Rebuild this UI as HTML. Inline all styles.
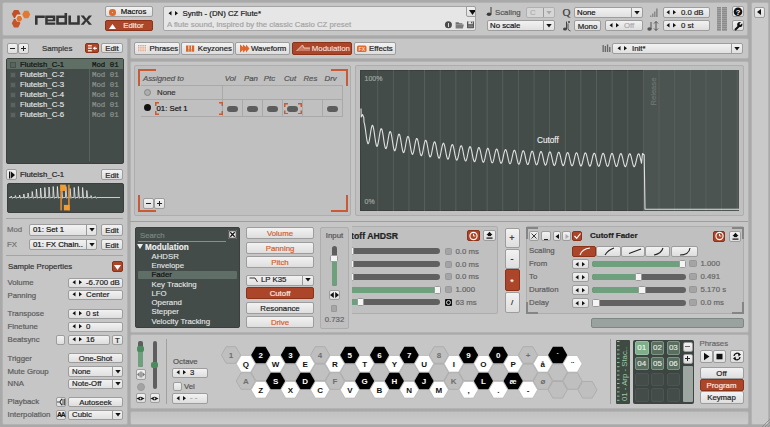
<!DOCTYPE html><html><head><meta charset="utf-8"><style>
*{margin:0;padding:0;box-sizing:border-box}
html,body{width:770px;height:427px;overflow:hidden;background:#a9a9a9;font-family:"Liberation Sans",sans-serif}
div{position:absolute}
.pn{border:1px solid #b3b3b3;border-radius:2px}
.ip{background:#c0c0c0;border:1px solid #adadad;border-radius:2px}
.dk{background:#444c49;border:1px solid #3a403e;border-radius:2px}
.t{white-space:nowrap;line-height:10px;-webkit-text-stroke:0.2px currentColor}
.b{background:linear-gradient(#f2f2f2,#dedede);border:1px solid #9d9d9d;border-radius:2px;text-align:center;white-space:nowrap;overflow:hidden;-webkit-text-stroke:0.2px currentColor}
.b.act{background:#ab462a;border-color:#8a3318}
.dd{background:linear-gradient(#f2f2f2,#e0e0e0);border:1px solid #9d9d9d;border-radius:2px}
.dd.dis{background:#d6d6d6;border-color:#b0b0b0}
.inp{background:#e6e6e6;border:1px solid #a5a5a5;border-radius:2px}
</style></head><body><div class="pn" style="left:2px;top:2px;width:746px;height:34px;background:#c6c6c6;"></div>
<div class="pn" style="left:751px;top:2px;width:17.5px;height:423px;background:#c9c9c9;"></div>
<div class="pn" style="left:2px;top:38px;width:126px;height:387px;background:#c6c6c6;"></div>
<div class="pn" style="left:130px;top:38px;width:618.5px;height:21px;background:#c6c6c6;"></div>
<div class="pn" style="left:130px;top:61px;width:618.5px;height:272px;background:#c6c6c6;"></div>
<div class="pn" style="left:130px;top:334px;width:618.5px;height:75px;background:#c6c6c6;"></div>
<div class="pn" style="left:130px;top:410.5px;width:618.5px;height:14.5px;background:linear-gradient(#c2c2c2,#cbcbcb);"></div>
<svg style="position:absolute;left:0;top:0" width="100" height="36"><polygon points="11.80,14.00 14.00,9.90 18.40,9.90 20.60,14.00 18.40,18.10 14.00,18.10" fill="#c1502a"/><polygon points="11.80,23.25 13.95,18.95 18.25,18.95 20.40,23.25 18.25,27.55 13.95,27.55" fill="#c4542b"/><polygon points="22.25,14.45 24.25,10.75 28.25,10.75 30.25,14.45 28.25,18.15 24.25,18.15" fill="#e17a31"/><polygon points="15.00,18.10 17.00,14.40 21.00,14.40 23.00,18.10 21.00,21.80 17.00,21.80" fill="#d8d6d4"/><polygon points="16.40,18.75 17.88,16.05 20.83,16.05 22.30,18.75 20.83,21.45 17.88,21.45" fill="#e0742e"/><g fill="#363636">
<path d="M35 15.5 h9.8 v2.6 h-7.2 v6.7 h-2.6z"/>
<path fill-rule="evenodd" d="M45.2 15.5 H55.3 V21.3 H47.7 V22.4 H55.3 V24.8 H45.2Z M47.7 18 H52.8 V19.6 H47.7Z"/>
<path fill-rule="evenodd" d="M56.2 15.5 H64.5 V13 H67.1 V24.8 H56.2Z M58.8 18 V22.3 H64.5 V18Z"/>
<path d="M68.4 15.5 H71 V22.3 H77.2 V15.5 H79.8 V24.8 H68.4Z"/>
<path d="M80.6 15.5 H83.8 L86.3 18.7 L88.8 15.5 H92 L88 20.15 L92 24.8 H88.8 L86.3 21.6 L83.8 24.8 H80.6 L84.6 20.15Z"/>
</g></svg>
<div class="b" style="left:105px;top:6px;width:48px;height:11px;"><div style="position:absolute;left:3px;top:2px;width:6.5px;height:6.5px;border-radius:50%;background:#de6c2e"></div><div style="position:absolute;left:6px;top:4.8px;width:1px;height:1px;background:#f6d0b8"></div><div class="t" style="left:12.5px;top:0px;width:30px;text-align:center;font-size:7.8px;line-height:10px;color:#111">Macros</div></div>
<div class="b act" style="left:105px;top:20px;width:48px;height:11px;"><svg width="7" height="5" style="position:absolute;left:3px;top:2.5px"><path d="M0 5 L3.5 0 L7 5Z" fill="#fff"/></svg><div class="t" style="left:12.5px;top:0px;width:30px;text-align:center;font-size:7.8px;line-height:10px;color:#f6e4de">Editor</div></div>
<div class="inp" style="left:163px;top:6px;width:313px;height:25px;"></div>
<svg width="11" height="5" style="position:absolute;left:168px;top:11px"><path d="M0.5 2.3 L3.5 0 L3.5 4.6Z M10 2.3 L7 0 L7 4.6Z" fill="#111"/></svg>
<div class="t" style="left:182.5px;top:8.5px;font-size:7.8px;color:#1a1a1a;font-weight:normal;text-align:left;">Synth - (DN) CZ Flute*</div>
<div class="t" style="left:167px;top:19.5px;font-size:7.8px;color:#a4a4a4;font-weight:normal;text-align:left;">A flute sound, inspired by the classic Casio CZ preset</div>
<div class="b" style="left:466px;top:6px;width:10px;height:11px;border-radius:0 2px 0 2px"><svg width="7" height="5" style="position:absolute;left:1.5px;top:3px"><path d="M0 0 L7 0 L3.5 5Z" fill="#111"/></svg></div>
<svg style="position:absolute;left:440px;top:18px" width="40" height="14">
<circle cx="8.4" cy="6.75" r="3.5" fill="#4a4a4a"/><rect x="8" y="5" width="0.9" height="4" fill="#eaeaea"/>
<path d="M15.6 4.2 h3 l0.8 1 h3 v1.2 h-6.8z" fill="#6e6e6e"/><path d="M15.6 6.4 h8.3 l-1 4 h-7.3z" fill="#7c7c7c"/>
<rect x="27" y="3.2" width="7" height="7" rx="0.6" fill="#555"/><rect x="28.3" y="3.2" width="4.4" height="3" fill="#e0e0e0"/><rect x="31" y="3.7" width="1" height="1.6" fill="#555"/><rect x="28" y="7.3" width="5" height="2" fill="#808080"/>
</svg>
<svg style="position:absolute;left:486px;top:6px" width="8" height="11"><ellipse cx="3" cy="8.2" rx="2.3" ry="1.8" fill="#3a3a3a"/><rect x="4.5" y="1" width="1" height="7" fill="#3a3a3a"/></svg>
<div class="t" style="left:495px;top:7.5px;font-size:7.8px;color:#555;font-weight:normal;text-align:left;">Scaling</div>
<div class="dd dis" style="left:526px;top:7px;width:29px;height:11px;"><div class="t" style="left:3px;top:-0.5px;font-size:7.8px;color:#b0b0b0">C</div><div style="position:absolute;right:0;top:0;width:11px;height:9px;border-left:1px solid #9a9a9a"></div><svg width="6" height="4" style="position:absolute;right:2.0px;top:2.75px"><path d="M0.3 0 L5.7 0 L3 3.5Z" fill="#aaa"/></svg></div>
<div class="dd" style="left:487px;top:20px;width:68px;height:11px;"><div class="t" style="left:2px;top:-0.5px;font-size:7.8px;color:#111">No scale</div><div style="position:absolute;right:0;top:0;width:11px;height:9px;border-left:1px solid #9a9a9a"></div><svg width="6" height="4" style="position:absolute;right:2.0px;top:2.75px"><path d="M0.3 0 L5.7 0 L3 3.5Z" fill="#111"/></svg></div>
<div class="t" style="left:562.5px;top:6px;font-family:'Liberation Serif',serif;font-size:11px;line-height:12px;color:#3c3c3c;-webkit-text-stroke:0.2px #3c3c3c">Q</div>
<div class="dd" style="left:574px;top:7px;width:69px;height:11px;"><div class="t" style="left:2px;top:-0.5px;font-size:7.8px;color:#111">None</div><div style="position:absolute;right:0;top:0;width:11px;height:9px;border-left:1px solid #9a9a9a"></div><svg width="6" height="4" style="position:absolute;right:2.0px;top:2.75px"><path d="M0.3 0 L5.7 0 L3 3.5Z" fill="#111"/></svg></div>
<svg style="position:absolute;left:561px;top:20px" width="12" height="12"><path d="M5.5 1.5 v7.5" stroke="#444" stroke-width="1"/><ellipse cx="4" cy="9" rx="2" ry="1.6" fill="#444"/><path d="M7 3.5 v5 q0 2 2.5 2.5" stroke="#444" stroke-width="0.9" fill="none"/><circle cx="8" cy="2" r="1" fill="#444"/></svg>
<div class="b" style="left:574px;top:20px;width:27px;height:11px;line-height:11px;font-size:7.8px;color:#222;font-weight:normal;">Mono</div>
<div class="b" style="left:605px;top:20px;width:38px;height:11px;"><svg width="11" height="5" style="position:absolute;left:2.5px;top:1.9000000000000001px"><path d="M0.5 2.3 L3.5 0 L3.5 4.6Z M10 2.3 L7 0 L7 4.6Z" fill="#111"/></svg><div class="t" style="left:18px;top:-0.5px;font-size:7.8px;color:#aaa">Off</div></div>
<svg style="position:absolute;left:648px;top:6px" width="12" height="12"><path d="M2 11 h1.5 v-1.5 h-1.5z M4 11 h1.5 v-3.5 h-1.5z M6 11 h1.5 v-5.5 h-1.5z M8 11 h1.7 v-8.5 h-1.7z" fill="#8c8c8c"/></svg>
<div class="b" style="left:662.5px;top:7px;width:47.5px;height:11px;"><svg width="11" height="5" style="position:absolute;left:2.5px;top:1.9000000000000001px"><path d="M0.5 2.3 L3.5 0 L3.5 4.6Z M10 2.3 L7 0 L7 4.6Z" fill="#111"/></svg><div class="t" style="left:17.5px;top:-0.5px;font-size:7.8px;color:#222">0.0 dB</div></div>
<svg style="position:absolute;left:646px;top:20px" width="14" height="12"><path d="M5 2 v7" stroke="#555" stroke-width="1"/><ellipse cx="3.5" cy="9" rx="2.2" ry="1.7" fill="#555"/><path d="M10 1.5 v9 M8 3.5 l2-2 l2 2 M8 8.5 l2 2 l2-2" stroke="#555" stroke-width="1" fill="none"/></svg>
<div class="b" style="left:662.5px;top:20px;width:47.5px;height:11px;"><svg width="11" height="5" style="position:absolute;left:2.5px;top:1.9000000000000001px"><path d="M0.5 2.3 L3.5 0 L3.5 4.6Z M10 2.3 L7 0 L7 4.6Z" fill="#111"/></svg><div class="t" style="left:17.5px;top:-0.5px;font-size:7.8px;color:#222">0 st</div></div>
<div style="position:absolute;left:716.5px;top:7px;width:4.5px;height:23.5px;background:repeating-linear-gradient(#8c8c8c 0 1px,#9e9e9e 1px 2px)"></div>
<div style="position:absolute;left:722px;top:7px;width:4.5px;height:23.5px;background:repeating-linear-gradient(#8c8c8c 0 1px,#9e9e9e 1px 2px)"></div>
<div class="b" style="left:732px;top:6px;width:12px;height:11px;line-height:11px;font-size:7.8px;color:#222;font-weight:normal;"></div>
<svg style="position:absolute;left:733px;top:7px" width="10" height="10"><circle cx="5" cy="4.8" r="4.3" fill="#111"/><text x="5" y="7.6" text-anchor="middle" font-family="Liberation Sans" font-weight="bold" font-size="7.5" fill="#fff">?</text></svg>
<div class="b" style="left:732px;top:20px;width:12px;height:11px;line-height:11px;font-size:7.8px;color:#222;font-weight:normal;"></div>
<svg style="position:absolute;left:733px;top:21px" width="10" height="10"><path d="M2 9 L5.8 5.2" stroke="#111" stroke-width="2"/><circle cx="6.8" cy="3.5" r="2.6" fill="#111"/><path d="M6.8 3.5 L9.5 0.8" stroke="#e6e6e6" stroke-width="1.6"/></svg>
<div class="b" style="left:753.7px;top:6.5px;width:11px;height:11px;line-height:11px;font-size:7.8px;color:#222;font-weight:normal;"></div>
<svg style="position:absolute;left:757px;top:9px" width="5" height="6"><path d="M0 3 L4 0 L4 6Z" fill="#111"/></svg>
<div class="b" style="left:6.5px;top:42.5px;width:11.5px;height:11px;line-height:11px;font-size:7.8px;color:#222;font-weight:normal;"></div>
<div class="b" style="left:17.5px;top:42.5px;width:11.5px;height:11px;line-height:11px;font-size:7.8px;color:#222;font-weight:normal;"></div>
<div style="left:10px;top:48px;width:5px;height:1px;background:#222"></div><div style="left:21px;top:48px;width:5px;height:1px;background:#222"></div><div style="left:23px;top:46px;width:1px;height:5px;background:#222"></div>
<div class="t" style="left:42px;top:43.8px;font-size:7.8px;color:#333;font-weight:normal;text-align:left;">Samples</div>
<div class="b act" style="left:85px;top:43px;width:14px;height:10px;line-height:10px;font-size:7.8px;color:#222;font-weight:normal;"></div>
<svg style="position:absolute;left:86px;top:44px" width="12" height="9"><path d="M2 1.8 h3.8 M2 4.3 h3.8 M2 6.8 h3.8" stroke="#f4d8cc" stroke-width="1.4"/><path d="M7.5 4.3 h3.5" stroke="#fff" stroke-width="1"/><path d="M7 4.3 L9.3 2.3 V6.3Z" fill="#fff"/></svg>
<div class="b" style="left:101px;top:43px;width:22px;height:10px;line-height:10px;font-size:7.8px;color:#222;font-weight:normal;">Edit</div>
<div class="dk" style="left:6px;top:58px;width:118px;height:106px;"></div>
<div style="position:absolute;left:7px;top:59px;width:116px;height:10px;background:#5f6f66"></div>
<div style="position:absolute;left:89px;top:69px;width:1px;height:92px;background:#5a625e"></div>
<div style="position:absolute;left:10px;top:61.5px;width:6px;height:6px;background:#5c625f;border:1px solid #4a504d"></div>
<div class="t" style="left:20px;top:59.5px;font-size:7.8px;color:#111;font-weight:normal;text-align:left;">Fluteish_C-1</div>
<div class="t" style="left:92px;top:59.5px;font-family:'Liberation Mono',monospace;font-size:7.4px;color:#111">Mod 01</div>
<div style="position:absolute;left:10px;top:71.5px;width:6px;height:6px;background:#5c625f;border:1px solid #4a504d"></div>
<div class="t" style="left:20px;top:69.5px;font-size:7.8px;color:#eef0ef;font-weight:normal;text-align:left;-webkit-text-stroke-width:0.1px;">Fluteish_C-2</div>
<div class="t" style="left:92px;top:69.5px;font-family:'Liberation Mono',monospace;font-size:7.4px;color:#8c938f">Mod 01</div>
<div style="position:absolute;left:10px;top:81.5px;width:6px;height:6px;background:#5c625f;border:1px solid #4a504d"></div>
<div class="t" style="left:20px;top:79.5px;font-size:7.8px;color:#eef0ef;font-weight:normal;text-align:left;-webkit-text-stroke-width:0.1px;">Fluteish_C-3</div>
<div class="t" style="left:92px;top:79.5px;font-family:'Liberation Mono',monospace;font-size:7.4px;color:#8c938f">Mod 01</div>
<div style="position:absolute;left:10px;top:91.5px;width:6px;height:6px;background:#5c625f;border:1px solid #4a504d"></div>
<div class="t" style="left:20px;top:89.5px;font-size:7.8px;color:#eef0ef;font-weight:normal;text-align:left;-webkit-text-stroke-width:0.1px;">Fluteish_C-4</div>
<div class="t" style="left:92px;top:89.5px;font-family:'Liberation Mono',monospace;font-size:7.4px;color:#8c938f">Mod 01</div>
<div style="position:absolute;left:10px;top:101.5px;width:6px;height:6px;background:#5c625f;border:1px solid #4a504d"></div>
<div class="t" style="left:20px;top:99.5px;font-size:7.8px;color:#eef0ef;font-weight:normal;text-align:left;-webkit-text-stroke-width:0.1px;">Fluteish_C-5</div>
<div class="t" style="left:92px;top:99.5px;font-family:'Liberation Mono',monospace;font-size:7.4px;color:#8c938f">Mod 01</div>
<div style="position:absolute;left:10px;top:111.5px;width:6px;height:6px;background:#5c625f;border:1px solid #4a504d"></div>
<div class="t" style="left:20px;top:109.5px;font-size:7.8px;color:#eef0ef;font-weight:normal;text-align:left;-webkit-text-stroke-width:0.1px;">Fluteish_C-6</div>
<div class="t" style="left:92px;top:109.5px;font-family:'Liberation Mono',monospace;font-size:7.4px;color:#8c938f">Mod 01</div>
<div class="b" style="left:6px;top:169px;width:11px;height:11px;line-height:11px;font-size:7.8px;color:#222;font-weight:normal;"></div>
<svg style="position:absolute;left:8px;top:171px" width="8" height="8"><rect x="1" y="0.5" width="1.3" height="7" fill="#111"/><path d="M3 0.5 L7 4 L3 7.5Z" fill="#111"/></svg>
<div class="t" style="left:20px;top:169.5px;font-size:7.8px;color:#222;font-weight:normal;text-align:left;">Fluteish_C-1</div>
<div class="b" style="left:101px;top:169px;width:22px;height:11px;line-height:11px;font-size:7.8px;color:#222;font-weight:normal;">Edit</div>
<div class="dk" style="left:6.5px;top:183px;width:117px;height:30px;"></div>
<svg style="position:absolute;left:0;top:0" width="130" height="220"><path d="M9 197.5 L10.9 197.5 L11.2 196.0 L12.2 198.3 L13.0 197.5 L15.1 197.5 L15.4 195.5 L16.4 198.3 L17.2 197.5 L19.3 197.5 L19.6 195.0 L20.6 198.3 L21.4 197.5 L23.5 197.5 L23.8 194.0 L24.8 198.3 L25.6 197.5 L27.7 197.5 L28.0 193.0 L29.0 198.3 L29.8 197.5 L31.9 197.5 L32.2 191.5 L33.2 198.3 L34.0 197.5 L36.1 197.5 L36.4 189.0 L37.4 198.3 L38.2 197.5 L40.3 197.5 L40.6 188.0 L41.6 198.3 L42.4 197.5 L44.5 197.5 L44.8 187.5 L45.8 198.3 L46.6 197.5 L48.7 197.5 L49.0 187.0 L50.0 198.3 L50.8 197.5 L52.9 197.5 L53.2 186.5 L54.2 198.3 L55.0 197.5 L57.1 197.5 L57.4 186.5 L58.4 198.3 L59.2 197.5 L61.3 197.5 L61.6 186.5 L62.6 198.3 L63.4 197.5 L65.5 197.5 L65.8 186.5 L66.8 198.3 L67.6 197.5 L69.7 197.5 L70.0 188.5 L71.0 198.3 L71.8 197.5 L73.9 197.5 L74.2 187.5 L75.2 198.3 L76.0 197.5 L78.1 197.5 L78.4 186.5 L79.4 198.3 L80.2 197.5 L82.3 197.5 L82.6 187.5 L83.6 198.3 L84.4 197.5 L86.5 197.5 L86.8 190.5 L87.8 198.3 L88.6 197.5 L90.7 197.5 L91.0 195.5 L92.0 198.3 L92.8 197.5 L94.9 197.5 L95.2 196.5 L96.2 198.3 L97.0 197.5 L120 197.5" fill="none" stroke="#eeeeee" stroke-width="0.8"/><rect x="60.3" y="184.7" width="1.6" height="25.7" fill="#e08a30"/><rect x="68.1" y="184.7" width="1.6" height="25.7" fill="#e08a30"/><rect x="60.3" y="184.7" width="5.5" height="6.2" fill="#f49c30"/><rect x="63.9" y="204.9" width="5.8" height="5.5" fill="#f49c30"/></svg>
<div style="position:absolute;left:6px;top:218px;width:117px;height:1px;background:#a4a4a4"></div>
<div class="t" style="left:7px;top:225px;font-size:7.8px;color:#707070;font-weight:normal;text-align:left;">Mod</div>
<div class="dd" style="left:29px;top:224px;width:68px;height:12px;"><div class="t" style="left:3px;top:0.0px;font-size:7.8px;color:#111">01: Set 1</div><div style="position:absolute;right:0;top:0;width:10px;height:10px;border-left:1px solid #9a9a9a"></div><svg width="6" height="4" style="position:absolute;right:1.5px;top:3.25px"><path d="M0.3 0 L5.7 0 L3 3.5Z" fill="#111"/></svg></div>
<div class="b" style="left:101px;top:224px;width:22px;height:12px;line-height:12px;font-size:7.8px;color:#222;font-weight:normal;">Edit</div>
<div class="t" style="left:7px;top:239.5px;font-size:7.8px;color:#707070;font-weight:normal;text-align:left;">FX</div>
<div class="dd" style="left:29px;top:239px;width:68px;height:11px;"><div class="t" style="left:3px;top:-0.5px;font-size:7.8px;color:#111">01: FX Chain..</div><div style="position:absolute;right:0;top:0;width:10px;height:9px;border-left:1px solid #9a9a9a"></div><svg width="6" height="4" style="position:absolute;right:1.5px;top:2.75px"><path d="M0.3 0 L5.7 0 L3 3.5Z" fill="#111"/></svg></div>
<div class="b" style="left:101px;top:239px;width:22px;height:11px;line-height:11px;font-size:7.8px;color:#222;font-weight:normal;">Edit</div>
<div style="position:absolute;left:6px;top:255px;width:117px;height:1px;background:#a4a4a4"></div>
<div class="t" style="left:8px;top:262px;font-size:7.8px;color:#333;font-weight:normal;text-align:left;">Sample Properties</div>
<div class="b act" style="left:112px;top:261px;width:11px;height:11px;line-height:11px;font-size:7.8px;color:#222;font-weight:normal;"></div>
<svg style="position:absolute;left:114px;top:264.5px" width="7" height="5"><path d="M0 0 L7 0 L3.5 5Z" fill="#fff"/></svg>
<div class="t" style="left:7.5px;top:277.5px;font-size:7.8px;color:#5c5c5c;font-weight:normal;text-align:left;">Volume</div>
<div class="b" style="left:68px;top:278px;width:55px;height:10px;"><svg width="11" height="5" style="position:absolute;left:2.5px;top:1.4000000000000001px"><path d="M0.5 2.3 L3.5 0 L3.5 4.6Z M10 2.3 L7 0 L7 4.6Z" fill="#111"/></svg><div class="t" style="left:17px;top:-1.0px;font-size:7.8px;color:#222">-6.700 dB</div></div>
<div class="t" style="left:7.5px;top:290.5px;font-size:7.8px;color:#5c5c5c;font-weight:normal;text-align:left;">Panning</div>
<div class="b" style="left:68px;top:290px;width:55px;height:10px;"><svg width="11" height="5" style="position:absolute;left:2.5px;top:1.4000000000000001px"><path d="M0.5 2.3 L3.5 0 L3.5 4.6Z M10 2.3 L7 0 L7 4.6Z" fill="#111"/></svg><div class="t" style="left:17px;top:-1.0px;font-size:7.8px;color:#222">Center</div></div>
<div class="t" style="left:7.5px;top:309px;font-size:7.8px;color:#5c5c5c;font-weight:normal;text-align:left;">Transpose</div>
<div class="b" style="left:68px;top:309px;width:55px;height:10px;"><svg width="11" height="5" style="position:absolute;left:2.5px;top:1.4000000000000001px"><path d="M0.5 2.3 L3.5 0 L3.5 4.6Z M10 2.3 L7 0 L7 4.6Z" fill="#111"/></svg><div class="t" style="left:17px;top:-1.0px;font-size:7.8px;color:#222">0 st</div></div>
<div class="t" style="left:7.5px;top:322px;font-size:7.8px;color:#5c5c5c;font-weight:normal;text-align:left;">Finetune</div>
<div class="b" style="left:68px;top:322px;width:55px;height:10px;"><svg width="11" height="5" style="position:absolute;left:2.5px;top:1.4000000000000001px"><path d="M0.5 2.3 L3.5 0 L3.5 4.6Z M10 2.3 L7 0 L7 4.6Z" fill="#111"/></svg><div class="t" style="left:17px;top:-1.0px;font-size:7.8px;color:#222">0</div></div>
<div class="t" style="left:7.5px;top:335px;font-size:7.8px;color:#5c5c5c;font-weight:normal;text-align:left;">Beatsync</div>
<div class="b" style="left:56px;top:335px;width:9px;height:10px;line-height:10px;font-size:7.8px;color:#222;font-weight:normal;"></div>
<div class="b" style="left:68px;top:335px;width:42px;height:10px;"><svg width="11" height="5" style="position:absolute;left:2.5px;top:1.4000000000000001px"><path d="M0.5 2.3 L3.5 0 L3.5 4.6Z M10 2.3 L7 0 L7 4.6Z" fill="#111"/></svg><div class="t" style="left:17px;top:-1.0px;font-size:7.8px;color:#222">16</div></div>
<div class="b" style="left:112px;top:335px;width:11px;height:10px;line-height:10px;font-size:7.8px;color:#222;font-weight:normal;">T</div>
<div class="t" style="left:7.5px;top:353.5px;font-size:7.8px;color:#5c5c5c;font-weight:normal;text-align:left;">Trigger</div>
<div class="b" style="left:68px;top:353px;width:55px;height:10px;line-height:10px;font-size:7.8px;color:#222;font-weight:normal;">One-Shot</div>
<div class="t" style="left:7.5px;top:366.5px;font-size:7.8px;color:#5c5c5c;font-weight:normal;text-align:left;">Mute Group</div>
<div class="dd" style="left:68px;top:366px;width:55px;height:11px;"><div class="t" style="left:3px;top:-0.5px;font-size:7.8px;color:#222">None</div><div style="position:absolute;right:0;top:0;width:10px;height:9px;border-left:1px solid #9a9a9a"></div><svg width="6" height="4" style="position:absolute;right:1.5px;top:2.75px"><path d="M0.3 0 L5.7 0 L3 3.5Z" fill="#111"/></svg></div>
<div class="t" style="left:7.5px;top:379px;font-size:7.8px;color:#5c5c5c;font-weight:normal;text-align:left;">NNA</div>
<div class="dd" style="left:68px;top:379px;width:55px;height:10px;"><div class="t" style="left:3px;top:-1.0px;font-size:7.8px;color:#222">Note-Off</div><div style="position:absolute;right:0;top:0;width:10px;height:8px;border-left:1px solid #9a9a9a"></div><svg width="6" height="4" style="position:absolute;right:1.5px;top:2.25px"><path d="M0.3 0 L5.7 0 L3 3.5Z" fill="#111"/></svg></div>
<div class="t" style="left:7.5px;top:397px;font-size:7.8px;color:#5c5c5c;font-weight:normal;text-align:left;">Playback</div>
<div class="b" style="left:55.5px;top:396.5px;width:10.5px;height:10.5px;line-height:10.5px;font-size:7.8px;color:#222;font-weight:normal;"></div>
<div class="b" style="left:68px;top:397px;width:55px;height:10px;line-height:10px;font-size:7.8px;color:#222;font-weight:normal;">Autoseek</div>
<svg style="position:absolute;left:55.5px;top:396.5px" width="11" height="10"><path d="M1.2 5 h1.6" stroke="#222" stroke-width="1.1"/><path d="M6 1.8 L3.8 5 L6 8.2" stroke="#222" stroke-width="1.1" fill="none"/><path d="M7 1.8 v6.4 M8.6 1.8 v6.4" stroke="#222" stroke-width="0.8"/></svg>
<div class="t" style="left:7.5px;top:410px;font-size:7.8px;color:#5c5c5c;font-weight:normal;text-align:left;">Interpolation</div>
<div class="b" style="left:55.5px;top:409.5px;width:10.5px;height:10.5px;line-height:10.5px;font-size:7.8px;color:#222;font-weight:normal;"></div>
<div class="dd" style="left:68px;top:410px;width:55px;height:10px;"><div class="t" style="left:3px;top:-1.0px;font-size:7.8px;color:#222">Cubic</div><div style="position:absolute;right:0;top:0;width:10px;height:8px;border-left:1px solid #9a9a9a"></div><svg width="6" height="4" style="position:absolute;right:1.5px;top:2.25px"><path d="M0.3 0 L5.7 0 L3 3.5Z" fill="#111"/></svg></div>
<div class="t" style="left:55.5px;top:409.5px;width:10.5px;text-align:center;font-size:6.8px;font-weight:bold;line-height:10.5px;color:#1a1a1a;letter-spacing:-1.2px">AA</div>
<div class="b" style="left:134px;top:42px;width:46px;height:13px;line-height:13px;font-size:7.8px;color:#222;font-weight:normal;"></div>
<div class="b" style="left:181px;top:42px;width:53px;height:13px;line-height:13px;font-size:7.8px;color:#222;font-weight:normal;"></div>
<div class="b" style="left:235px;top:42px;width:55px;height:13px;line-height:13px;font-size:7.8px;color:#222;font-weight:normal;"></div>
<div class="b act" style="left:292px;top:42px;width:60px;height:13px;line-height:13px;font-size:7.8px;color:#222;font-weight:normal;"></div>
<div class="b" style="left:354px;top:42px;width:42px;height:13px;line-height:13px;font-size:7.8px;color:#222;font-weight:normal;"></div>
<svg style="position:absolute;left:0;top:38px" width="400" height="20">
<g fill="#e49a78">
<rect x="138" y="7" width="1.4" height="7"/><rect x="140.2" y="7" width="1.4" height="7"/><rect x="142.4" y="7" width="1.4" height="7"/><rect x="144.6" y="7" width="1.4" height="7"/>
</g>
<g fill="#f2f2f2"><rect x="137" y="8" width="10" height="0.6"/><rect x="137" y="9.8" width="10" height="0.6"/><rect x="137" y="11.6" width="10" height="0.6"/><rect x="137" y="13.2" width="10" height="0.6"/></g>
<path d="M186 7.5 h8.2 v6.2 h-8.2z" fill="#d9652a"/><path d="M188.4 7.5 h0.9 v3.5 h-0.9z M191 7.5 h0.9 v3.5 h-0.9z" fill="#f2f2f2"/><path d="M188.8 11 v2.7 M191.4 11 v2.7" stroke="#f2f2f2" stroke-width="0.5"/>
<path d="M240 6.5 v8 l3-2.5 v2.5 l3-2.5 v2.5 l3.5-4 l-3.5-4 v2.5 l-3-2.5 v2.5 l-3-2.5z" fill="#e0662c"/>
<path d="M296.5 13 L302.5 7 L304 10 H310 V13Z" fill="#c97a62"/><path d="M296.5 13 L302.5 7 L304 10 H310" stroke="#f4d6cb" stroke-width="0.9" fill="none"/>
<rect x="357" y="7.5" width="9.5" height="6.5" rx="1.5" fill="#e06a30"/><text x="361.8" y="12.8" text-anchor="middle" font-family="Liberation Sans" font-weight="bold" font-size="5" fill="#f9d9c9">FX</text>
</svg>
<div class="t" style="left:149.6px;top:43.5px;font-size:7.8px;color:#222;font-weight:normal;text-align:left;">Phrases</div>
<div class="t" style="left:197.7px;top:43.5px;font-size:7.8px;color:#222;font-weight:normal;text-align:left;">Keyzones</div>
<div class="t" style="left:251px;top:43.5px;font-size:7.8px;color:#222;font-weight:normal;text-align:left;">Waveform</div>
<div class="t" style="left:311.8px;top:43.5px;font-size:7.8px;color:#f7e6e0;font-weight:normal;text-align:left;-webkit-text-stroke-width:0.1px;">Modulation</div>
<div class="t" style="left:369px;top:43.5px;font-size:7.8px;color:#222;font-weight:normal;text-align:left;">Effects</div>
<svg style="position:absolute;left:602px;top:44px" width="9" height="9"><rect x="0.5" y="1" width="1.3" height="7" fill="#666"/><rect x="2.7" y="2" width="1.3" height="6" fill="#666"/><rect x="4.9" y="0.5" width="1.3" height="7.5" fill="#666"/><rect x="7.1" y="3" width="1.3" height="5" fill="#666"/></svg>
<div class="dd" style="left:612px;top:43px;width:131px;height:11px;"><div class="t" style="left:3px;top:-0.5px;font-size:7.8px;color:#222"></div><div style="position:absolute;right:0;top:0;width:11px;height:9px;border-left:1px solid #9a9a9a"></div><svg width="6" height="4" style="position:absolute;right:2.0px;top:2.75px"><path d="M0.3 0 L5.7 0 L3 3.5Z" fill="#111"/></svg></div>
<svg width="11" height="5" style="position:absolute;left:617px;top:46px"><path d="M0.5 2.3 L3.5 0 L3.5 4.6Z M10 2.3 L7 0 L7 4.6Z" fill="#111"/></svg>
<div class="t" style="left:632px;top:43.5px;font-size:7.8px;color:#222;font-weight:normal;text-align:left;">Init*</div>
<div class="ip" style="left:134.2px;top:65.4px;width:217.3px;height:150.4px;"></div>
<div style="position:absolute;left:137.5px;top:69px;width:18px;height:16.5px;border:0 solid #c95a36;border-top-width:2px;border-left-width:2px;box-sizing:border-box"></div>
<div style="position:absolute;left:330.8px;top:69px;width:17.2px;height:16.5px;border:0 solid #c95a36;border-top-width:2px;border-right-width:2px;box-sizing:border-box"></div>
<div style="position:absolute;left:137.5px;top:195px;width:18px;height:17px;border:0 solid #c95a36;border-bottom-width:2px;border-left-width:2px;box-sizing:border-box"></div>
<div style="position:absolute;left:330.8px;top:195px;width:17.2px;height:17px;border:0 solid #c95a36;border-bottom-width:2px;border-right-width:2px;box-sizing:border-box"></div>
<div class="t" style="left:143px;top:73.5px;font-size:7.8px;color:#555;font-weight:normal;text-align:left;font-style:italic">Assigned to</div>
<div class="t" style="left:218.3px;top:73.5px;font-size:7.8px;color:#555;font-weight:normal;text-align:center;width:24px;font-style:italic">Vol</div>
<div class="t" style="left:239px;top:73.5px;font-size:7.8px;color:#555;font-weight:normal;text-align:center;width:24px;font-style:italic">Pan</div>
<div class="t" style="left:257.5px;top:73.5px;font-size:7.8px;color:#555;font-weight:normal;text-align:center;width:24px;font-style:italic">Ptc</div>
<div class="t" style="left:278px;top:73.5px;font-size:7.8px;color:#555;font-weight:normal;text-align:center;width:24px;font-style:italic">Cut</div>
<div class="t" style="left:298.4px;top:73.5px;font-size:7.8px;color:#555;font-weight:normal;text-align:center;width:24px;font-style:italic">Res</div>
<div class="t" style="left:318.6px;top:73.5px;font-size:7.8px;color:#555;font-weight:normal;text-align:center;width:24px;font-style:italic">Drv</div>
<div style="position:absolute;left:141px;top:85px;width:201px;height:1px;background:#a9a9a9"></div>
<div style="position:absolute;left:141px;top:99px;width:201px;height:1px;background:#a9a9a9"></div>
<div style="position:absolute;left:141px;top:116px;width:201px;height:1px;background:#a9a9a9"></div>
<div style="position:absolute;left:342px;top:85px;width:1px;height:32px;background:#a9a9a9"></div>
<div style="position:absolute;left:222px;top:85px;width:1px;height:32px;background:#a9a9a9"></div>
<div style="position:absolute;left:242px;top:100px;width:1px;height:16px;background:#a9a9a9"></div>
<div style="position:absolute;left:262px;top:100px;width:1px;height:16px;background:#a9a9a9"></div>
<div style="position:absolute;left:282px;top:100px;width:1px;height:16px;background:#a9a9a9"></div>
<div style="position:absolute;left:302px;top:100px;width:1px;height:16px;background:#a9a9a9"></div>
<div style="position:absolute;left:322px;top:100px;width:1px;height:16px;background:#a9a9a9"></div>
<div style="position:absolute;left:143.5px;top:89px;width:7px;height:7px;border-radius:50%;background:#aeaeae;border:1.2px solid #858585"></div>
<div class="t" style="left:157px;top:87.5px;font-size:7.8px;color:#333;font-weight:normal;text-align:left;">None</div>
<div style="position:absolute;left:143.5px;top:104px;width:7px;height:7px;border-radius:50%;background:#111"></div>
<div class="t" style="left:156.5px;top:103.8px;font-size:7.8px;color:#111;font-weight:normal;text-align:left;">01: Set 1</div>
<svg style="position:absolute;left:155px;top:102px" width="68" height="13"><path d="M4 0.75 H0.75 V4 M0.75 9 V12.25 H4 M64 0.75 H67.25 V4 M67.25 9 V12.25 H64" fill="none" stroke="#c95a36" stroke-width="1.5"/></svg>
<div style="position:absolute;left:226.5px;top:105.5px;width:11px;height:6px;border-radius:3px;background:#5c5c5c"></div>
<div style="position:absolute;left:246.5px;top:105.5px;width:11px;height:6px;border-radius:3px;background:#5c5c5c"></div>
<div style="position:absolute;left:266.5px;top:105.5px;width:11px;height:6px;border-radius:3px;background:#5c5c5c"></div>
<div style="position:absolute;left:286.5px;top:105.5px;width:11px;height:6px;border-radius:3px;background:#5c5c5c"></div>
<div style="position:absolute;left:326.5px;top:105.5px;width:11px;height:6px;border-radius:3px;background:#5c5c5c"></div>
<svg style="position:absolute;left:283.5px;top:102.5px" width="18" height="11.5"><path d="M4 0.75 H0.75 V4 M0.75 7.5 V10.75 H4 M14 0.75 H17.25 V4 M17.25 7.5 V10.75 H14" fill="none" stroke="#c95a36" stroke-width="1.5"/></svg>
<div class="b" style="left:142.5px;top:197.5px;width:11px;height:11px;line-height:11px;font-size:7.8px;color:#222;font-weight:normal;"></div>
<div class="b" style="left:153.5px;top:197.5px;width:11px;height:11px;line-height:11px;font-size:7.8px;color:#222;font-weight:normal;"></div>
<div style="left:146px;top:203px;width:5px;height:1px;background:#222"></div><div style="left:157px;top:203px;width:5px;height:1px;background:#222"></div><div style="left:159px;top:201px;width:1px;height:5px;background:#222"></div>
<div class="ip" style="left:355.3px;top:65.4px;width:389px;height:150.4px;"></div>
<div class="dk" style="left:360px;top:70px;width:379px;height:141px;border-radius:0"></div>
<div style="position:absolute;left:644px;top:70px;width:95px;height:141px;background:#4c5451"></div>
<svg style="position:absolute;left:0;top:0" width="770" height="427"><rect x="377.30" y="70" width="0.8" height="141" fill="#5b6360"/><rect x="392.93" y="70" width="0.8" height="141" fill="#5b6360"/><rect x="408.56" y="70" width="0.8" height="141" fill="#5b6360"/><rect x="424.19" y="70" width="0.8" height="141" fill="#5b6360"/><rect x="439.82" y="70" width="0.8" height="141" fill="#5b6360"/><rect x="455.45" y="70" width="0.8" height="141" fill="#5b6360"/><rect x="471.08" y="70" width="0.8" height="141" fill="#5b6360"/><rect x="486.71" y="70" width="0.8" height="141" fill="#5b6360"/><rect x="502.34" y="70" width="0.8" height="141" fill="#5b6360"/><rect x="517.97" y="70" width="0.8" height="141" fill="#5b6360"/><rect x="533.60" y="70" width="0.8" height="141" fill="#5b6360"/><rect x="549.23" y="70" width="0.8" height="141" fill="#5b6360"/><rect x="564.86" y="70" width="0.8" height="141" fill="#5b6360"/><rect x="580.49" y="70" width="0.8" height="141" fill="#5b6360"/><rect x="596.12" y="70" width="0.8" height="141" fill="#5b6360"/><rect x="611.75" y="70" width="0.8" height="141" fill="#5b6360"/><rect x="627.38" y="70" width="0.8" height="141" fill="#5b6360"/><rect x="643.01" y="70" width="0.8" height="141" fill="#5b6360"/><rect x="658.64" y="70" width="0.8" height="141" fill="#5b6360"/><rect x="674.27" y="70" width="0.8" height="141" fill="#5b6360"/><rect x="689.90" y="70" width="0.8" height="141" fill="#5b6360"/><rect x="705.53" y="70" width="0.8" height="141" fill="#5b6360"/><rect x="721.16" y="70" width="0.8" height="141" fill="#5b6360"/><rect x="736.79" y="70" width="0.8" height="141" fill="#5b6360"/><path d="M361.0 108.5 L361.2 117.0 L362.6 114.6 L363.8 117.5 L364.0 122.1 L364.5 123.9 L365.0 126.7 L365.5 130.2 L366.0 133.9 L366.5 137.6 L367.0 140.6 L367.5 142.7 L368.0 143.7 L368.5 143.4 L369.0 141.9 L369.5 139.4 L370.0 136.3 L370.5 133.0 L371.0 129.8 L371.5 127.3 L372.0 125.7 L372.5 125.3 L373.0 126.1 L373.5 128.1 L374.0 130.9 L374.5 134.4 L375.0 138.0 L375.5 141.3 L376.0 144.0 L376.5 145.8 L377.0 146.3 L377.5 145.7 L378.0 144.0 L378.5 141.4 L379.0 138.4 L379.5 135.1 L380.0 132.2 L380.5 130.0 L381.0 128.8 L381.5 128.7 L382.0 129.7 L382.5 131.8 L383.0 134.7 L383.5 138.1 L384.0 141.6 L384.5 144.6 L385.0 147.0 L385.5 148.4 L386.0 148.6 L386.5 147.8 L387.0 145.9 L387.5 143.2 L388.0 140.1 L388.5 137.1 L389.0 134.4 L389.5 132.5 L390.0 131.5 L390.5 131.7 L391.0 133.0 L391.5 135.2 L392.0 138.2 L392.5 141.5 L393.0 144.7 L393.5 147.6 L394.0 149.6 L394.5 150.7 L395.0 150.6 L395.5 149.5 L396.0 147.4 L396.5 144.7 L397.0 141.7 L397.5 138.8 L398.0 136.4 L398.5 134.7 L399.0 134.1 L399.5 134.5 L400.0 136.0 L400.5 138.4 L401.0 141.3 L401.5 144.5 L402.0 147.6 L402.5 150.1 L403.0 151.9 L403.5 152.6 L404.0 152.3 L404.5 150.9 L405.0 148.7 L405.5 146.0 L406.0 143.0 L406.5 140.3 L407.0 138.1 L407.5 136.7 L408.0 136.4 L408.5 137.0 L409.0 138.7 L409.5 141.2 L410.0 144.2 L410.5 147.2 L411.0 150.1 L411.5 152.4 L412.0 153.8 L412.5 154.3 L413.0 153.7 L413.5 152.1 L414.0 149.8 L414.5 147.0 L415.0 144.2 L415.5 141.6 L416.0 139.7 L416.5 138.6 L417.0 138.5 L417.5 139.4 L418.0 141.2 L418.5 143.8 L419.0 146.7 L419.5 149.7 L420.0 152.4 L420.5 154.4 L421.0 155.5 L421.5 155.7 L422.0 154.8 L422.5 153.1 L423.0 150.7 L423.5 147.9 L424.0 145.2 L424.5 142.8 L425.0 141.1 L425.5 140.2 L426.0 140.4 L426.5 141.5 L427.0 143.5 L427.5 146.1 L428.0 149.0 L428.5 151.9 L429.0 154.3 L429.5 156.1 L430.0 157.0 L430.5 156.8 L431.0 155.8 L431.5 153.9 L432.0 151.4 L432.5 148.7 L433.0 146.1 L433.5 143.9 L434.0 142.4 L434.5 141.8 L435.0 142.2 L435.5 143.5 L436.0 145.7 L436.5 148.3 L437.0 151.1 L437.5 153.8 L438.0 156.1 L438.5 157.6 L439.0 158.2 L439.5 157.8 L440.0 156.5 L440.5 154.5 L441.0 152.0 L441.5 149.3 L442.0 146.8 L442.5 144.8 L443.0 143.6 L443.5 143.2 L444.0 143.9 L444.5 145.4 L445.0 147.6 L445.5 150.3 L446.0 153.1 L446.5 155.6 L447.0 157.6 L447.5 158.9 L448.0 159.2 L448.5 158.6 L449.0 157.1 L449.5 155.0 L450.0 152.4 L450.5 149.8 L451.0 147.5 L451.5 145.7 L452.0 144.7 L452.5 144.6 L453.0 145.4 L453.5 147.1 L454.0 149.4 L454.5 152.1 L455.0 154.8 L455.5 157.2 L456.0 159.0 L456.5 160.0 L457.0 160.1 L457.5 159.2 L458.0 157.6 L458.5 155.3 L459.0 152.8 L459.5 150.2 L460.0 148.0 L460.5 146.4 L461.0 145.7 L461.5 145.8 L462.0 146.9 L462.5 148.7 L463.0 151.1 L463.5 153.8 L464.0 156.4 L464.5 158.6 L465.0 160.2 L465.5 160.9 L466.0 160.7 L466.5 159.7 L467.0 157.9 L467.5 155.5 L468.0 153.0 L468.5 150.6 L469.0 148.5 L469.5 147.2 L470.0 146.6 L470.5 147.0 L471.0 148.3 L471.5 150.2 L472.0 152.7 L472.5 155.3 L473.0 157.8 L473.5 159.8 L474.0 161.2 L474.5 161.7 L475.0 161.3 L475.5 160.0 L476.0 158.1 L476.5 155.7 L477.0 153.2 L477.5 150.8 L478.0 149.0 L478.5 147.8 L479.0 147.5 L479.5 148.1 L480.0 149.6 L480.5 151.6 L481.0 154.1 L481.5 156.7 L482.0 159.1 L482.5 160.9 L483.0 162.0 L483.5 162.3 L484.0 161.7 L484.5 160.2 L485.0 158.2 L485.5 155.7 L486.0 153.3 L486.5 151.1 L487.0 149.4 L487.5 148.4 L488.0 148.4 L488.5 149.2 L489.0 150.8 L489.5 153.0 L490.0 155.5 L490.5 158.0 L491.0 160.2 L491.5 161.9 L492.0 162.8 L492.5 162.8 L493.0 161.9 L493.5 160.3 L494.0 158.2 L494.5 155.7 L495.0 153.3 L495.5 151.2 L496.0 149.8 L496.5 149.0 L497.0 149.2 L497.5 150.2 L498.0 152.0 L498.5 154.2 L499.0 156.7 L499.5 159.2 L500.0 161.2 L500.5 162.7 L501.0 163.3 L501.5 163.1 L502.0 162.1 L502.5 160.3 L503.0 158.1 L503.5 155.7 L504.0 153.3 L504.5 151.4 L505.0 150.1 L505.5 149.6 L506.0 150.0 L506.5 151.2 L507.0 153.1 L507.5 155.4 L508.0 157.9 L508.5 160.2 L509.0 162.2 L509.5 163.4 L510.0 163.8 L510.5 163.4 L511.0 162.2 L511.5 160.3 L512.0 158.0 L512.5 155.6 L513.0 153.3 L513.5 151.6 L514.0 150.5 L514.5 150.2 L515.0 150.8 L515.5 152.2 L516.0 154.2 L516.5 156.5 L517.0 159.0 L517.5 161.2 L518.0 163.0 L518.5 164.0 L519.0 164.2 L519.5 163.5 L520.0 162.1 L520.5 160.1 L521.0 157.8 L521.5 155.4 L522.0 153.3 L522.5 151.7 L523.0 150.8 L523.5 150.8 L524.0 151.6 L524.5 153.1 L525.0 155.2 L525.5 157.6 L526.0 160.0 L526.5 162.1 L527.0 163.7 L527.5 164.5 L528.0 164.5 L528.5 163.6 L529.0 162.0 L529.5 159.9 L530.0 157.6 L530.5 155.2 L531.0 153.2 L531.5 151.8 L532.0 151.2 L532.5 151.3 L533.0 152.3 L533.5 154.0 L534.0 156.2 L534.5 158.6 L535.0 160.9 L535.5 162.9 L536.0 164.3 L536.5 164.9 L537.0 164.6 L537.5 163.6 L538.0 161.8 L538.5 159.7 L539.0 157.3 L539.5 155.0 L540.0 153.2 L540.5 152.0 L541.0 151.5 L541.5 151.9 L542.0 153.1 L542.5 154.9 L543.0 157.2 L543.5 159.6 L544.0 161.8 L544.5 163.6 L545.0 164.8 L545.5 165.2 L546.0 164.7 L546.5 163.5 L547.0 161.6 L547.5 159.4 L548.0 157.0 L548.5 154.8 L549.0 153.1 L549.5 152.1 L550.0 151.9 L550.5 152.5 L551.0 153.8 L551.5 155.8 L552.0 158.1 L552.5 160.5 L553.0 162.6 L553.5 164.3 L554.0 165.2 L554.5 165.4 L555.0 164.7 L555.5 163.3 L556.0 161.3 L556.5 159.0 L557.0 156.7 L557.5 154.6 L558.0 153.1 L558.5 152.3 L559.0 152.3 L559.5 153.1 L560.0 154.6 L560.5 156.6 L561.0 159.0 L561.5 161.3 L562.0 163.3 L562.5 164.8 L563.0 165.6 L563.5 165.5 L564.0 164.6 L564.5 163.1 L565.0 161.0 L565.5 158.7 L566.0 156.4 L566.5 154.5 L567.0 153.1 L567.5 152.5 L568.0 152.7 L568.5 153.7 L569.0 155.3 L569.5 157.5 L570.0 159.8 L570.5 162.1 L571.0 164.0 L571.5 165.3 L572.0 165.8 L572.5 165.5 L573.0 164.5 L573.5 162.8 L574.0 160.6 L574.5 158.3 L575.0 156.1 L575.5 154.3 L576.0 153.1 L576.5 152.7 L577.0 153.1 L577.5 154.3 L578.0 156.1 L578.5 158.3 L579.0 160.6 L579.5 162.8 L580.0 164.6 L580.5 165.7 L581.0 166.0 L581.5 165.5 L582.0 164.3 L582.5 162.4 L583.0 160.2 L583.5 157.9 L584.0 155.8 L584.5 154.1 L585.0 153.1 L585.5 152.9 L586.0 153.5 L586.5 154.9 L587.0 156.8 L587.5 159.1 L588.0 161.4 L588.5 163.5 L589.0 165.1 L589.5 166.0 L590.0 166.1 L590.5 165.4 L591.0 164.0 L591.5 162.0 L592.0 159.8 L592.5 157.5 L593.0 155.5 L593.5 154.0 L594.0 153.2 L594.5 153.2 L595.0 154.0 L595.5 155.5 L596.0 157.6 L596.5 159.8 L597.0 162.1 L597.5 164.1 L598.0 165.5 L598.5 166.2 L599.0 166.1 L599.5 165.3 L600.0 163.7 L600.5 161.6 L601.0 159.3 L601.5 157.1 L602.0 155.2 L602.5 153.9 L603.0 153.3 L603.5 153.5 L604.0 154.5 L604.5 156.2 L605.0 158.3 L605.5 160.6 L606.0 162.8 L606.5 164.7 L607.0 165.9 L607.5 166.4 L608.0 166.1 L608.5 165.0 L609.0 163.3 L609.5 161.2 L610.0 158.9 L610.5 156.7 L611.0 154.9 L611.5 153.8 L612.0 153.4 L612.5 153.8 L613.0 155.0 L613.5 156.8 L614.0 159.0 L614.5 161.3 L615.0 163.5 L615.5 165.2 L616.0 166.2 L616.5 166.5 L617.0 166.0 L617.5 164.7 L618.0 162.9 L618.5 160.7 L619.0 158.4 L619.5 156.3 L620.0 154.7 L620.5 153.7 L621.0 153.6 L621.5 154.2 L622.0 155.6 L622.5 157.5 L623.0 159.7 L623.5 162.0 L624.0 164.1 L624.5 165.6 L625.0 166.5 L625.5 166.6 L626.0 165.8 L626.5 164.4 L627.0 162.4 L627.5 160.2 L628.0 157.9 L628.5 156.0 L629.0 154.5 L629.5 153.7 L630.0 153.8 L630.5 154.6 L631.0 156.1 L631.5 158.2 L632.0 160.4 L632.5 162.7 L633.0 164.6 L633.5 166.0 L634.0 166.7 L634.5 166.5 L635.0 165.6 L635.5 164.0 L636.0 162.0 L636.5 159.7 L637.0 157.5 L637.5 155.6 L638.0 154.3 L638.5 153.8 L639.0 154.0 L639.5 155.0 L640.0 156.7 L640.5 158.8 L641.0 161.1 L641.5 163.3 L642.5 153.5 L644.2 155.0 L645.0 209.3 L739.0 209.3" fill="none" stroke="#dfe1df" stroke-width="1.1" stroke-linejoin="round"/><text x="0" y="0" transform="translate(656 105.5) rotate(-90)" font-family="Liberation Sans" font-size="7.6" fill="#6f7774" stroke="#6f7774" stroke-width="0.15">Release</text></svg>
<div class="t" style="left:364.5px;top:74px;font-size:7px;color:#9ca39f;font-weight:normal;text-align:left;">100%</div>
<div class="t" style="left:364.5px;top:197px;font-size:7px;color:#9ca39f;font-weight:normal;text-align:left;">0%</div>
<div class="t" style="left:537px;top:136px;font-size:8.2px;color:#f2f2f2;font-weight:normal;text-align:left;-webkit-text-stroke-width:0.1px;">Cutoff</div>
<div style="position:absolute;left:130px;top:220.5px;width:618px;height:1px;background:#9e9e9e"></div>
<div class="dk" style="left:135px;top:227px;width:105px;height:101px;"></div>
<div class="t" style="left:140px;top:231px;font-size:7.8px;color:#7c8481;font-weight:normal;text-align:left;">Search</div>
<div style="position:absolute;left:138px;top:240.5px;width:88px;height:1px;background:#87908b"></div>
<div style="position:absolute;left:228px;top:230px;width:9px;height:9px;background:#fff;border-radius:1px"></div>
<svg style="position:absolute;left:228px;top:230px" width="9" height="9"><rect x="0.8" y="0.8" width="7.4" height="7.4" fill="none" stroke="#111" stroke-width="1"/><path d="M2.3 2.3 L6.7 6.7 M6.7 2.3 L2.3 6.7" stroke="#111" stroke-width="1.3"/></svg>
<svg style="position:absolute;left:137px;top:244px" width="7" height="6"><path d="M0 0 H6 L3 5Z" fill="#eee"/></svg>
<div class="t" style="left:145px;top:242.8px;font-size:8.2px;color:#f1f1f1;font-weight:bold;text-align:left;-webkit-text-stroke-width:0.1px;">Modulation</div>
<div style="position:absolute;left:138px;top:270.5px;width:99px;height:8.5px;background:#5f6e66;border-radius:1px"></div>
<div class="t" style="left:151.5px;top:251.8px;font-size:7.8px;color:#e8eae9;font-weight:normal;text-align:left;-webkit-text-stroke-width:0.1px;">AHDSR</div>
<div class="t" style="left:151.5px;top:261.07px;font-size:7.8px;color:#e8eae9;font-weight:normal;text-align:left;-webkit-text-stroke-width:0.1px;">Envelope</div>
<div class="t" style="left:151.5px;top:270.34000000000003px;font-size:7.8px;color:#111;font-weight:normal;text-align:left;">Fader</div>
<div class="t" style="left:151.5px;top:279.61px;font-size:7.8px;color:#e8eae9;font-weight:normal;text-align:left;-webkit-text-stroke-width:0.1px;">Key Tracking</div>
<div class="t" style="left:151.5px;top:288.88px;font-size:7.8px;color:#e8eae9;font-weight:normal;text-align:left;-webkit-text-stroke-width:0.1px;">LFO</div>
<div class="t" style="left:151.5px;top:298.15px;font-size:7.8px;color:#e8eae9;font-weight:normal;text-align:left;-webkit-text-stroke-width:0.1px;">Operand</div>
<div class="t" style="left:151.5px;top:307.42px;font-size:7.8px;color:#e8eae9;font-weight:normal;text-align:left;-webkit-text-stroke-width:0.1px;">Stepper</div>
<div class="t" style="left:151.5px;top:316.69px;font-size:7.8px;color:#e8eae9;font-weight:normal;text-align:left;-webkit-text-stroke-width:0.1px;">Velocity Tracking</div>
<div class="b" style="left:246px;top:227px;width:68px;height:12px;line-height:12px;font-size:7.8px;color:#d2602e;font-weight:normal;">Volume</div>
<div class="b" style="left:246px;top:241.5px;width:68px;height:12px;line-height:12px;font-size:7.8px;color:#d2602e;font-weight:normal;">Panning</div>
<div class="b" style="left:246px;top:255.5px;width:68px;height:12px;line-height:12px;font-size:7.8px;color:#d2602e;font-weight:normal;">Pitch</div>
<div class="dd" style="left:246px;top:274.5px;width:68px;height:11px;"><div class="t" style="left:14px;top:-0.5px;font-size:7.8px;color:#222">LP K35</div><div style="position:absolute;right:0;top:0;width:11px;height:9px;border-left:1px solid #9a9a9a"></div><svg width="6" height="4" style="position:absolute;right:2.0px;top:2.75px"><path d="M0.3 0 L5.7 0 L3 3.5Z" fill="#111"/></svg></div>
<svg style="position:absolute;left:249px;top:277px" width="10" height="6"><path d="M0.5 1 H6 L8.5 5" stroke="#333" stroke-width="1" fill="none"/></svg>
<div class="b act" style="left:246px;top:287px;width:68px;height:12px;line-height:12px;font-size:7.8px;color:#f8e8e2;font-weight:normal;">Cutoff</div>
<div class="b" style="left:246px;top:301.5px;width:68px;height:12px;line-height:12px;font-size:7.8px;color:#222;font-weight:normal;">Resonance</div>
<div class="b" style="left:246px;top:315.5px;width:68px;height:12px;line-height:12px;font-size:7.8px;color:#d2602e;font-weight:normal;">Drive</div>
<div class="ip" style="left:320px;top:226.5px;width:28.5px;height:102px;"></div>
<div class="t" style="left:320px;top:231px;font-size:7.8px;color:#555;font-weight:normal;text-align:center;width:29px;">Input</div>
<div style="position:absolute;left:331.5px;top:245.5px;width:5.5px;height:40.5px;border-radius:3px;background:#5e5e5e"></div>
<div style="position:absolute;left:331.5px;top:258px;width:5.5px;height:28px;border-radius:0 0 3px 3px;background:#6fa07e"></div>
<div style="position:absolute;left:330px;top:254.5px;width:8px;height:7.5px;border-radius:1.5px;background:#f4f4f4;border:0.5px solid #999;box-sizing:border-box"></div>
<div class="b" style="left:329px;top:290px;width:10.5px;height:10px;line-height:10px;font-size:7.8px;color:#222;font-weight:normal;"></div>
<svg style="position:absolute;left:330px;top:292px" width="9" height="6"><path d="M0 3 L3.8 0 L3.8 6Z M9 3 L5.2 0 L5.2 6Z" fill="#111"/></svg>
<div style="position:absolute;left:331px;top:304.5px;width:6px;height:7px;background:#a6a6a6;border:1px solid #989898;border-radius:1px;box-sizing:border-box"></div>
<div class="t" style="left:320px;top:314.5px;font-size:7.8px;color:#666;font-weight:normal;text-align:center;width:29px;">0.732</div>
<div style="position:absolute;left:351px;top:226px;width:148px;height:88.5px;overflow:hidden"><div class="ip" style="left:-20px;top:0px;width:167px;height:88px;"></div></div>
<div class="t" style="left:351px;top:231.3px;font-size:8.7px;color:#222;font-weight:bold;text-align:left;overflow:hidden;width:60px"><span style='position:relative;left:-11.5px'>Cutoff AHDSR</span></div>
<div class="b act" style="left:467px;top:230px;width:13px;height:11px;line-height:11px;font-size:7.8px;color:#222;font-weight:normal;"></div>
<svg style="position:absolute;left:468px;top:230.5px" width="11" height="10"><circle cx="5.5" cy="5" r="3.6" fill="none" stroke="#fff" stroke-width="1.1"/><path d="M5.5 2.8 V5 H7.3" stroke="#fff" stroke-width="0.9" fill="none"/></svg>
<div class="b" style="left:483px;top:230px;width:12.5px;height:11px;line-height:11px;font-size:7.8px;color:#222;font-weight:normal;"></div>
<svg style="position:absolute;left:484px;top:231px" width="11" height="9"><path d="M5.5 0.8 L8.5 4 H2.5Z" fill="#111"/><rect x="3.8" y="3.5" width="3.4" height="1.6" fill="#111"/><rect x="2.5" y="6.5" width="6" height="1.2" fill="#111"/></svg>
<div style="position:absolute;left:351px;top:248px;width:89px;height:6px;border-radius:0 3px 3px 0;background:#606060"></div>
<div style="position:absolute;left:349px;top:247px;width:5px;height:8px;border-radius:1.5px;background:#f4f4f4;border:0.5px solid #999;box-sizing:border-box"></div>
<div style="position:absolute;left:444.5px;top:247.5px;width:7px;height:7px;background:#a4a4a4;border:1px solid #979797;border-radius:1.5px;box-sizing:border-box"></div>
<div class="t" style="left:455.5px;top:246.6px;font-size:7.8px;color:#666;font-weight:normal;text-align:left;">0.0 ms</div>
<div style="position:absolute;left:351px;top:261px;width:89px;height:6px;border-radius:0 3px 3px 0;background:#606060"></div>
<div style="position:absolute;left:349px;top:260px;width:5px;height:8px;border-radius:1.5px;background:#f4f4f4;border:0.5px solid #999;box-sizing:border-box"></div>
<div style="position:absolute;left:444.5px;top:260.5px;width:7px;height:7px;background:#a4a4a4;border:1px solid #979797;border-radius:1.5px;box-sizing:border-box"></div>
<div class="t" style="left:455.5px;top:259.6px;font-size:7.8px;color:#666;font-weight:normal;text-align:left;">0.0 ms</div>
<div style="position:absolute;left:351px;top:273.7px;width:89px;height:6px;border-radius:0 3px 3px 0;background:#606060"></div>
<div style="position:absolute;left:349px;top:272.7px;width:5px;height:8px;border-radius:1.5px;background:#f4f4f4;border:0.5px solid #999;box-sizing:border-box"></div>
<div style="position:absolute;left:444.5px;top:273.2px;width:7px;height:7px;background:#a4a4a4;border:1px solid #979797;border-radius:1.5px;box-sizing:border-box"></div>
<div class="t" style="left:455.5px;top:272.3px;font-size:7.8px;color:#666;font-weight:normal;text-align:left;">0.0 ms</div>
<div style="position:absolute;left:351px;top:286.5px;width:89px;height:6px;border-radius:0 3px 3px 0;background:#606060"></div>
<div style="position:absolute;left:351px;top:286.5px;width:85.80000000000001px;height:6px;background:#6ea07d"></div>
<div style="position:absolute;left:433.8px;top:285.5px;width:7px;height:8px;border-radius:1.5px;background:#f4f4f4;border:0.5px solid #999;box-sizing:border-box"></div>
<div style="position:absolute;left:444.5px;top:286.0px;width:7px;height:7px;background:#a4a4a4;border:1px solid #979797;border-radius:1.5px;box-sizing:border-box"></div>
<div class="t" style="left:455.5px;top:285.1px;font-size:7.8px;color:#666;font-weight:normal;text-align:left;">1.000</div>
<div style="position:absolute;left:351px;top:299.2px;width:89px;height:6px;border-radius:0 3px 3px 0;background:#606060"></div>
<div style="position:absolute;left:351px;top:299.2px;width:8.795999999999992px;height:6px;background:#6ea07d"></div>
<div style="position:absolute;left:356.8px;top:298.2px;width:7px;height:8px;border-radius:1.5px;background:#f4f4f4;border:0.5px solid #999;box-sizing:border-box"></div>
<div style="position:absolute;left:444.5px;top:298.7px;width:7px;height:7px;background:#111;border-radius:1px"></div>
<svg style="position:absolute;left:444.5px;top:298.7px" width="7" height="7"><circle cx="3.5" cy="3.5" r="2" fill="none" stroke="#ddd" stroke-width="0.9"/></svg>
<div class="t" style="left:455.5px;top:297.8px;font-size:7.8px;color:#666;font-weight:normal;text-align:left;">63 ms</div>
<div style="position:absolute;left:349px;top:226px;width:2.5px;height:89px;background:#c6c6c6"></div>
<div class="b" style="left:504.5px;top:227.5px;width:15px;height:20.5px;line-height:20.5px;font-size:7.8px;color:#222;font-weight:normal;"></div>
<div class="b" style="left:504.5px;top:248.5px;width:15px;height:20px;line-height:20px;font-size:7.8px;color:#222;font-weight:normal;"></div>
<div class="b act" style="left:504.5px;top:269.3px;width:15px;height:21.7px;line-height:21.7px;font-size:7.8px;color:#222;font-weight:normal;"></div>
<div class="b" style="left:504.5px;top:291.8px;width:15px;height:21.5px;line-height:21.5px;font-size:7.8px;color:#222;font-weight:normal;"></div>
<div class="t" style="left:504.5px;top:233px;font-size:9px;color:#222;font-weight:normal;text-align:center;width:15px;">+</div>
<div class="t" style="left:504.5px;top:254px;font-size:9px;color:#222;font-weight:normal;text-align:center;width:15px;">-</div>
<div class="t" style="left:504.5px;top:276.5px;font-size:9px;color:#fff;font-weight:normal;text-align:center;width:15px;-webkit-text-stroke-width:0.1px;">*</div>
<div class="t" style="left:504.5px;top:298px;font-size:8px;color:#222;font-weight:normal;text-align:center;width:15px;">/</div>
<div class="ip" style="left:525.5px;top:226px;width:218px;height:88px;"></div>
<div style="position:absolute;left:525.5px;top:226.5px;width:12px;height:12px;border:0 solid #858585;border-top-width:2px;border-left-width:2px;box-sizing:border-box"></div>
<div style="position:absolute;left:731.5px;top:226.5px;width:12px;height:12px;border:0 solid #858585;border-top-width:2px;border-right-width:2px;box-sizing:border-box"></div>
<div style="position:absolute;left:525.5px;top:302px;width:12px;height:12px;border:0 solid #858585;border-bottom-width:2px;border-left-width:2px;box-sizing:border-box"></div>
<div style="position:absolute;left:731.5px;top:302px;width:12px;height:12px;border:0 solid #858585;border-bottom-width:2px;border-right-width:2px;box-sizing:border-box"></div>
<div class="b" style="left:529px;top:231px;width:10px;height:10px;line-height:10px;font-size:7.8px;color:#222;font-weight:normal;"></div>
<svg style="position:absolute;left:530px;top:232px" width="8" height="8"><path d="M1.5 1.5 L6.5 6.5 M6.5 1.5 L1.5 6.5" stroke="#222" stroke-width="0.9"/></svg>
<div class="b" style="left:541px;top:231px;width:10px;height:10px;line-height:10px;font-size:7.8px;color:#222;font-weight:normal;"></div>
<div style="position:absolute;left:544px;top:238.5px;width:4px;height:1px;background:#222"></div>
<div class="b" style="left:552.5px;top:231px;width:8.5px;height:10px;line-height:10px;font-size:7.8px;color:#222;font-weight:normal;"></div>
<svg style="position:absolute;left:554.5px;top:233.5px" width="5" height="5"><path d="M0.5 2.5 L4 0 L4 5Z" fill="#111"/></svg>
<div class="b" style="left:562px;top:231px;width:8.5px;height:10px;line-height:10px;font-size:7.8px;color:#222;font-weight:normal;"></div>
<svg style="position:absolute;left:564.5px;top:233.5px" width="5" height="5"><path d="M4 2.5 L0.5 0 L0.5 5Z" fill="#aaa"/></svg>
<div class="b act" style="left:571.5px;top:231px;width:10.5px;height:10px;line-height:10px;font-size:7.8px;color:#222;font-weight:normal;"></div>
<svg style="position:absolute;left:572.5px;top:232px" width="9" height="8"><path d="M1.5 4 L3.7 6.3 L7.5 1.5" stroke="#fff" stroke-width="1.2" fill="none"/></svg>
<div class="t" style="left:590px;top:231px;font-size:8px;color:#222;font-weight:bold;text-align:left;">Cutoff Fader</div>
<div class="b act" style="left:712.5px;top:230.5px;width:12.5px;height:11px;line-height:11px;font-size:7.8px;color:#222;font-weight:normal;"></div>
<svg style="position:absolute;left:713.5px;top:231px" width="11" height="10"><circle cx="5.5" cy="5" r="3.6" fill="none" stroke="#fff" stroke-width="1.1"/><path d="M5.5 2.8 V5 H7.3" stroke="#fff" stroke-width="0.9" fill="none"/></svg>
<div class="b" style="left:729px;top:230.5px;width:11.5px;height:11px;line-height:11px;font-size:7.8px;color:#222;font-weight:normal;"></div>
<svg style="position:absolute;left:729.5px;top:231.5px" width="11" height="9"><path d="M5.5 0.8 L8.5 4 H2.5Z" fill="#111"/><rect x="3.8" y="3.5" width="3.4" height="1.6" fill="#111"/><rect x="2.5" y="6.5" width="6" height="1.2" fill="#111"/></svg>
<div class="t" style="left:529px;top:246px;font-size:7.8px;color:#5c5c5c;font-weight:normal;text-align:left;">Scaling</div>
<div class="b act" style="left:571.5px;top:245.5px;width:24.5px;height:11px;line-height:11px;font-size:7.8px;color:#222;font-weight:normal;"></div>
<svg style="position:absolute;left:575.5px;top:246px" width="20" height="10"><path d="M4 9 Q6 3 14 2" stroke="#fff" stroke-width="1.1" fill="none"/></svg>
<div class="b" style="left:596px;top:245.5px;width:24.5px;height:11px;line-height:11px;font-size:7.8px;color:#222;font-weight:normal;"></div>
<svg style="position:absolute;left:600px;top:246px" width="20" height="10"><path d="M5 9 Q8 4 14 2" stroke="#222" stroke-width="1.1" fill="none"/></svg>
<div class="b" style="left:620.5px;top:245.5px;width:24.700000000000045px;height:11px;line-height:11px;font-size:7.8px;color:#222;font-weight:normal;"></div>
<svg style="position:absolute;left:624.5px;top:246px" width="20" height="10"><path d="M4 7.5 L16 3" stroke="#222" stroke-width="1.1" fill="none"/></svg>
<div class="b" style="left:645.2px;top:245.5px;width:25.299999999999955px;height:11px;line-height:11px;font-size:7.8px;color:#222;font-weight:normal;"></div>
<svg style="position:absolute;left:649.2px;top:246px" width="20" height="10"><path d="M5 9 Q12 8 14 2" stroke="#222" stroke-width="1.1" fill="none"/></svg>
<div class="b" style="left:670.5px;top:245.5px;width:27.0px;height:11px;line-height:11px;font-size:7.8px;color:#222;font-weight:normal;"></div>
<svg style="position:absolute;left:674.5px;top:246px" width="20" height="10"><path d="M5 9 Q14 9 15 2" stroke="#222" stroke-width="1.1" fill="none"/></svg>
<div class="t" style="left:529px;top:258.5px;font-size:7.8px;color:#5c5c5c;font-weight:normal;text-align:left;">From</div>
<div class="b" style="left:571.5px;top:258.5px;width:17px;height:10.5px;line-height:10.5px;font-size:7.8px;color:#222;font-weight:normal;"></div>
<svg width="11" height="5" style="position:absolute;left:575px;top:261.5px"><path d="M0.5 2.3 L3.5 0 L3.5 4.6Z M10 2.3 L7 0 L7 4.6Z" fill="#111"/></svg>
<div style="position:absolute;left:592px;top:260.5px;width:93.5px;height:6px;border-radius:3px;background:#626262"></div>
<div style="position:absolute;left:592px;top:260.5px;width:89.5px;height:6px;border-radius:3px 0 0 3px;background:#6ea07d"></div>
<div style="position:absolute;left:678.5px;top:259.5px;width:7.5px;height:8px;border-radius:1.5px;background:#f4f4f4;border:0.5px solid #999;box-sizing:border-box"></div>
<div style="position:absolute;left:689px;top:260.0px;width:7.5px;height:7px;background:#a4a4a4;border:1px solid #979797;border-radius:1.5px;box-sizing:border-box"></div>
<div class="t" style="left:700.5px;top:258.5px;font-size:7.8px;color:#666;font-weight:normal;text-align:left;">1.000</div>
<div class="t" style="left:529px;top:271.8px;font-size:7.8px;color:#5c5c5c;font-weight:normal;text-align:left;">To</div>
<div class="b" style="left:571.5px;top:271.8px;width:17px;height:10.5px;line-height:10.5px;font-size:7.8px;color:#222;font-weight:normal;"></div>
<svg width="11" height="5" style="position:absolute;left:575px;top:274.8px"><path d="M0.5 2.3 L3.5 0 L3.5 4.6Z M10 2.3 L7 0 L7 4.6Z" fill="#111"/></svg>
<div style="position:absolute;left:592px;top:273.8px;width:93.5px;height:6px;border-radius:3px;background:#626262"></div>
<div style="position:absolute;left:592px;top:273.8px;width:45.5px;height:6px;border-radius:3px 0 0 3px;background:#6ea07d"></div>
<div style="position:absolute;left:634.5px;top:272.8px;width:7.5px;height:8px;border-radius:1.5px;background:#f4f4f4;border:0.5px solid #999;box-sizing:border-box"></div>
<div style="position:absolute;left:689px;top:273.3px;width:7.5px;height:7px;background:#a4a4a4;border:1px solid #979797;border-radius:1.5px;box-sizing:border-box"></div>
<div class="t" style="left:700.5px;top:271.8px;font-size:7.8px;color:#666;font-weight:normal;text-align:left;">0.491</div>
<div class="t" style="left:529px;top:284.8px;font-size:7.8px;color:#5c5c5c;font-weight:normal;text-align:left;">Duration</div>
<div class="b" style="left:571.5px;top:284.8px;width:17px;height:10.5px;line-height:10.5px;font-size:7.8px;color:#222;font-weight:normal;"></div>
<svg width="11" height="5" style="position:absolute;left:575px;top:287.8px"><path d="M0.5 2.3 L3.5 0 L3.5 4.6Z M10 2.3 L7 0 L7 4.6Z" fill="#111"/></svg>
<div style="position:absolute;left:592px;top:286.8px;width:93.5px;height:6px;border-radius:3px;background:#626262"></div>
<div style="position:absolute;left:592px;top:286.8px;width:49.3px;height:6px;border-radius:3px 0 0 3px;background:#6ea07d"></div>
<div style="position:absolute;left:638.3px;top:285.8px;width:7.5px;height:8px;border-radius:1.5px;background:#f4f4f4;border:0.5px solid #999;box-sizing:border-box"></div>
<div style="position:absolute;left:689px;top:286.3px;width:7.5px;height:7px;background:#a4a4a4;border:1px solid #979797;border-radius:1.5px;box-sizing:border-box"></div>
<div class="t" style="left:700.5px;top:284.8px;font-size:7.8px;color:#666;font-weight:normal;text-align:left;">5.170 s</div>
<div class="t" style="left:529px;top:297.7px;font-size:7.8px;color:#5c5c5c;font-weight:normal;text-align:left;">Delay</div>
<div class="b" style="left:571.5px;top:297.7px;width:17px;height:10.5px;line-height:10.5px;font-size:7.8px;color:#222;font-weight:normal;"></div>
<svg width="11" height="5" style="position:absolute;left:575px;top:300.7px"><path d="M0.5 2.3 L3.5 0 L3.5 4.6Z M10 2.3 L7 0 L7 4.6Z" fill="#111"/></svg>
<div style="position:absolute;left:592px;top:299.7px;width:93.5px;height:6px;border-radius:3px;background:#626262"></div>
<div style="position:absolute;left:592.0px;top:298.7px;width:7.5px;height:8px;border-radius:1.5px;background:#f4f4f4;border:0.5px solid #999;box-sizing:border-box"></div>
<div style="position:absolute;left:689px;top:299.2px;width:7.5px;height:7px;background:#a4a4a4;border:1px solid #979797;border-radius:1.5px;box-sizing:border-box"></div>
<div class="t" style="left:700.5px;top:297.7px;font-size:7.8px;color:#666;font-weight:normal;text-align:left;">0.0 ms</div>
<div style="position:absolute;left:590.5px;top:318px;width:153.5px;height:10px;border-radius:2px;background:#9aa29f;border:1px solid #7f8784;box-sizing:border-box"></div>
<div style="position:absolute;left:138px;top:341px;width:4.5px;height:25.5px;border-radius:2px;background:#5e5e5e"></div>
<div style="position:absolute;left:138px;top:348px;width:4.5px;height:18.5px;border-radius:0 0 2px 2px;background:#6fa07e"></div>
<div style="position:absolute;left:136.8px;top:345.5px;width:7px;height:6px;border-radius:2px;background:#4d8a5e"></div>
<div style="position:absolute;left:152.5px;top:341px;width:4.5px;height:47.5px;border-radius:2px;background:#5e5e5e"></div>
<div style="position:absolute;left:151.3px;top:361.5px;width:7px;height:6px;border-radius:2px;background:#4d8a5e"></div>
<div class="b" style="left:136px;top:369px;width:9.5px;height:10.5px;line-height:10.5px;font-size:7.8px;color:#222;font-weight:normal;"></div>
<svg style="position:absolute;left:135.5px;top:371px" width="10" height="7"><path d="M4.3 0.5 v6 M5.7 0.5 v6" stroke="#777" stroke-width="0.8"/><path d="M1 3.5 L3.5 1.3 V5.7Z M9 3.5 L6.5 1.3 V5.7Z" fill="#777"/></svg>
<div style="position:absolute;left:136.5px;top:382.5px;width:8px;height:8px;border-radius:50%;background:#a4a4a4;border:1px solid #9a9a9a"></div>
<div class="b" style="left:135.5px;top:392.5px;width:10px;height:10.5px;line-height:10.5px;font-size:7.8px;color:#222;font-weight:normal;"></div>
<div class="b" style="left:149.5px;top:392.5px;width:10px;height:10.5px;line-height:10.5px;font-size:7.8px;color:#222;font-weight:normal;"></div>
<svg style="position:absolute;left:136.0px;top:394.5px" width="9" height="7"><path d="M0.5 3.5 L2.5 2.5 Q4.5 0.8 6.5 2.5 L8.5 3.5 L6.5 4.5 Q4.5 6.2 2.5 4.5Z" fill="#111"/><circle cx="4.5" cy="3.5" r="0.9" fill="#ddd"/></svg>
<svg style="position:absolute;left:150.0px;top:394.5px" width="9" height="7"><path d="M0.5 3.5 L2.5 2.5 Q4.5 0.8 6.5 2.5 L8.5 3.5 L6.5 4.5 Q4.5 6.2 2.5 4.5Z" fill="#111"/><circle cx="4.5" cy="3.5" r="0.9" fill="#ddd"/></svg>
<div style="position:absolute;left:165.5px;top:339px;width:1px;height:65px;background:#a0a0a0"></div>
<div class="t" style="left:173px;top:356.5px;font-size:7.8px;color:#555;font-weight:normal;text-align:left;">Octave</div>
<div class="b" style="left:172px;top:368px;width:35.5px;height:10px;"><svg width="11" height="5" style="position:absolute;left:2.5px;top:1.4000000000000001px"><path d="M0.5 2.3 L3.5 0 L3.5 4.6Z M10 2.3 L7 0 L7 4.6Z" fill="#111"/></svg><div class="t" style="left:17px;top:-1.0px;font-size:7.8px;color:#222">3</div></div>
<div class="b" style="left:172.5px;top:382px;width:9px;height:9px;line-height:9px;font-size:7.8px;color:#222;font-weight:normal;"></div>
<div class="t" style="left:184px;top:381.5px;font-size:7.8px;color:#555;font-weight:normal;text-align:left;">Vel</div>
<div class="b" style="left:172px;top:393px;width:35.5px;height:10.5px;"><svg width="11" height="5" style="position:absolute;left:2.5px;top:1.6500000000000001px"><path d="M0.5 2.3 L3.5 0 L3.5 4.6Z M10 2.3 L7 0 L7 4.6Z" fill="#111"/></svg><div class="t" style="left:17px;top:-0.75px;font-size:7.8px;color:#aaa">- -</div></div>
<svg style="position:absolute;left:0;top:0" width="770" height="427"><polygon points="270.30,372.40 265.50,380.71 255.90,380.71 251.10,372.40 255.90,364.09 265.50,364.09" fill="#c1c1c1" stroke="#ababab" stroke-width="0.8"/><polygon points="300.00,372.40 295.20,380.71 285.60,380.71 280.80,372.40 285.60,364.09 295.20,364.09" fill="#c1c1c1" stroke="#ababab" stroke-width="0.8"/><polygon points="329.70,372.40 324.90,380.71 315.30,380.71 310.50,372.40 315.30,364.09 324.90,364.09" fill="#c1c1c1" stroke="#ababab" stroke-width="0.8"/><polygon points="359.40,372.40 354.60,380.71 345.00,380.71 340.20,372.40 345.00,364.09 354.60,364.09" fill="#c1c1c1" stroke="#ababab" stroke-width="0.8"/><polygon points="389.10,372.40 384.30,380.71 374.70,380.71 369.90,372.40 374.70,364.09 384.30,364.09" fill="#c1c1c1" stroke="#ababab" stroke-width="0.8"/><polygon points="418.80,372.40 414.00,380.71 404.40,380.71 399.60,372.40 404.40,364.09 414.00,364.09" fill="#c1c1c1" stroke="#ababab" stroke-width="0.8"/><polygon points="448.50,372.40 443.70,380.71 434.10,380.71 429.30,372.40 434.10,364.09 443.70,364.09" fill="#c1c1c1" stroke="#ababab" stroke-width="0.8"/><polygon points="478.20,372.40 473.40,380.71 463.80,380.71 459.00,372.40 463.80,364.09 473.40,364.09" fill="#c1c1c1" stroke="#ababab" stroke-width="0.8"/><polygon points="507.90,372.40 503.10,380.71 493.50,380.71 488.70,372.40 493.50,364.09 503.10,364.09" fill="#c1c1c1" stroke="#ababab" stroke-width="0.8"/><polygon points="537.60,372.40 532.80,380.71 523.20,380.71 518.40,372.40 523.20,364.09 532.80,364.09" fill="#c1c1c1" stroke="#ababab" stroke-width="0.8"/><polygon points="567.30,372.40 562.50,380.71 552.90,380.71 548.10,372.40 552.90,364.09 562.50,364.09" fill="#c1c1c1" stroke="#ababab" stroke-width="0.8"/><polygon points="240.60,355.00 235.80,363.31 226.20,363.31 221.40,355.00 226.20,346.69 235.80,346.69" fill="#bfbfbf" stroke="#a8a8a8" stroke-width="0.8"/><text x="231.00" y="357.80" text-anchor="middle" font-family="Liberation Sans" font-weight="bold" font-size="8" fill="#6e6e6e">1</text><polygon points="329.70,355.00 324.90,363.31 315.30,363.31 310.50,355.00 315.30,346.69 324.90,346.69" fill="#bfbfbf" stroke="#a8a8a8" stroke-width="0.8"/><text x="320.10" y="357.80" text-anchor="middle" font-family="Liberation Sans" font-weight="bold" font-size="8" fill="#6e6e6e">4</text><polygon points="448.50,355.00 443.70,363.31 434.10,363.31 429.30,355.00 434.10,346.69 443.70,346.69" fill="#bfbfbf" stroke="#a8a8a8" stroke-width="0.8"/><text x="438.90" y="357.80" text-anchor="middle" font-family="Liberation Sans" font-weight="bold" font-size="8" fill="#6e6e6e">8</text><polygon points="537.60,355.00 532.80,363.31 523.20,363.31 518.40,355.00 523.20,346.69 532.80,346.69" fill="#bfbfbf" stroke="#a8a8a8" stroke-width="0.8"/><text x="528.00" y="357.80" text-anchor="middle" font-family="Liberation Sans" font-weight="bold" font-size="8" fill="#6e6e6e">+</text><polygon points="255.45,381.00 250.65,389.31 241.05,389.31 236.25,381.00 241.05,372.69 250.65,372.69" fill="#bfbfbf" stroke="#a8a8a8" stroke-width="0.8"/><text x="245.85" y="383.80" text-anchor="middle" font-family="Liberation Sans" font-weight="bold" font-size="8" fill="#6e6e6e">A</text><polygon points="344.55,381.00 339.75,389.31 330.15,389.31 325.35,381.00 330.15,372.69 339.75,372.69" fill="#bfbfbf" stroke="#a8a8a8" stroke-width="0.8"/><text x="334.95" y="383.80" text-anchor="middle" font-family="Liberation Sans" font-weight="bold" font-size="8" fill="#6e6e6e">F</text><polygon points="463.35,381.00 458.55,389.31 448.95,389.31 444.15,381.00 448.95,372.69 458.55,372.69" fill="#bfbfbf" stroke="#a8a8a8" stroke-width="0.8"/><text x="453.75" y="383.80" text-anchor="middle" font-family="Liberation Sans" font-weight="bold" font-size="8" fill="#6e6e6e">K</text><polygon points="552.45,381.00 547.65,389.31 538.05,389.31 533.25,381.00 538.05,372.69 547.65,372.69" fill="#bfbfbf" stroke="#a8a8a8" stroke-width="0.8"/><text x="542.85" y="383.80" text-anchor="middle" font-family="Liberation Sans" font-weight="bold" font-size="8" fill="#6e6e6e">ø</text><polygon points="582.15,381.00 577.35,389.31 567.75,389.31 562.95,381.00 567.75,372.69 577.35,372.69" fill="#bfbfbf" stroke="#a8a8a8" stroke-width="0.8"/><polygon points="567.30,389.80 562.50,398.11 552.90,398.11 548.10,389.80 552.90,381.49 562.50,381.49" fill="#bfbfbf" stroke="#a8a8a8" stroke-width="0.8"/><polygon points="597.00,389.80 592.20,398.11 582.60,398.11 577.80,389.80 582.60,381.49 592.20,381.49" fill="#bfbfbf" stroke="#a8a8a8" stroke-width="0.8"/><polygon points="255.45,363.80 250.65,372.11 241.05,372.11 236.25,363.80 241.05,355.49 250.65,355.49" fill="#fff" stroke="#b9b9b9" stroke-width="0.8"/><text x="245.85" y="366.60" text-anchor="middle" font-family="Liberation Sans" font-weight="bold" font-size="8" fill="#111">Q</text><polygon points="285.15,363.80 280.35,372.11 270.75,372.11 265.95,363.80 270.75,355.49 280.35,355.49" fill="#fff" stroke="#b9b9b9" stroke-width="0.8"/><text x="275.55" y="366.60" text-anchor="middle" font-family="Liberation Sans" font-weight="bold" font-size="8" fill="#111">W</text><polygon points="314.85,363.80 310.05,372.11 300.45,372.11 295.65,363.80 300.45,355.49 310.05,355.49" fill="#fff" stroke="#b9b9b9" stroke-width="0.8"/><text x="305.25" y="366.60" text-anchor="middle" font-family="Liberation Sans" font-weight="bold" font-size="8" fill="#111">E</text><polygon points="344.55,363.80 339.75,372.11 330.15,372.11 325.35,363.80 330.15,355.49 339.75,355.49" fill="#fff" stroke="#b9b9b9" stroke-width="0.8"/><text x="334.95" y="366.60" text-anchor="middle" font-family="Liberation Sans" font-weight="bold" font-size="8" fill="#111">R</text><polygon points="374.25,363.80 369.45,372.11 359.85,372.11 355.05,363.80 359.85,355.49 369.45,355.49" fill="#fff" stroke="#b9b9b9" stroke-width="0.8"/><text x="364.65" y="366.60" text-anchor="middle" font-family="Liberation Sans" font-weight="bold" font-size="8" fill="#111">T</text><polygon points="403.95,363.80 399.15,372.11 389.55,372.11 384.75,363.80 389.55,355.49 399.15,355.49" fill="#fff" stroke="#b9b9b9" stroke-width="0.8"/><text x="394.35" y="366.60" text-anchor="middle" font-family="Liberation Sans" font-weight="bold" font-size="8" fill="#111">Y</text><polygon points="433.65,363.80 428.85,372.11 419.25,372.11 414.45,363.80 419.25,355.49 428.85,355.49" fill="#fff" stroke="#b9b9b9" stroke-width="0.8"/><text x="424.05" y="366.60" text-anchor="middle" font-family="Liberation Sans" font-weight="bold" font-size="8" fill="#111">U</text><polygon points="463.35,363.80 458.55,372.11 448.95,372.11 444.15,363.80 448.95,355.49 458.55,355.49" fill="#fff" stroke="#b9b9b9" stroke-width="0.8"/><text x="453.75" y="366.60" text-anchor="middle" font-family="Liberation Sans" font-weight="bold" font-size="8" fill="#111">I</text><polygon points="493.05,363.80 488.25,372.11 478.65,372.11 473.85,363.80 478.65,355.49 488.25,355.49" fill="#fff" stroke="#b9b9b9" stroke-width="0.8"/><text x="483.45" y="366.60" text-anchor="middle" font-family="Liberation Sans" font-weight="bold" font-size="8" fill="#111">O</text><polygon points="522.75,363.80 517.95,372.11 508.35,372.11 503.55,363.80 508.35,355.49 517.95,355.49" fill="#fff" stroke="#b9b9b9" stroke-width="0.8"/><text x="513.15" y="366.60" text-anchor="middle" font-family="Liberation Sans" font-weight="bold" font-size="8" fill="#111">P</text><polygon points="552.45,363.80 547.65,372.11 538.05,372.11 533.25,363.80 538.05,355.49 547.65,355.49" fill="#fff" stroke="#b9b9b9" stroke-width="0.8"/><text x="542.85" y="366.60" text-anchor="middle" font-family="Liberation Sans" font-weight="bold" font-size="8" fill="#111">å</text><polygon points="582.15,363.80 577.35,372.11 567.75,372.11 562.95,363.80 567.75,355.49 577.35,355.49" fill="#fff" stroke="#b9b9b9" stroke-width="0.8"/><text x="572.55" y="366.60" text-anchor="middle" font-family="Liberation Sans" font-weight="bold" font-size="8" fill="#111">¨</text><polygon points="270.30,389.80 265.50,398.11 255.90,398.11 251.10,389.80 255.90,381.49 265.50,381.49" fill="#fff" stroke="#b9b9b9" stroke-width="0.8"/><text x="260.70" y="392.60" text-anchor="middle" font-family="Liberation Sans" font-weight="bold" font-size="8" fill="#111">Z</text><polygon points="300.00,389.80 295.20,398.11 285.60,398.11 280.80,389.80 285.60,381.49 295.20,381.49" fill="#fff" stroke="#b9b9b9" stroke-width="0.8"/><text x="290.40" y="392.60" text-anchor="middle" font-family="Liberation Sans" font-weight="bold" font-size="8" fill="#111">X</text><polygon points="329.70,389.80 324.90,398.11 315.30,398.11 310.50,389.80 315.30,381.49 324.90,381.49" fill="#fff" stroke="#b9b9b9" stroke-width="0.8"/><text x="320.10" y="392.60" text-anchor="middle" font-family="Liberation Sans" font-weight="bold" font-size="8" fill="#111">C</text><polygon points="359.40,389.80 354.60,398.11 345.00,398.11 340.20,389.80 345.00,381.49 354.60,381.49" fill="#fff" stroke="#b9b9b9" stroke-width="0.8"/><text x="349.80" y="392.60" text-anchor="middle" font-family="Liberation Sans" font-weight="bold" font-size="8" fill="#111">V</text><polygon points="389.10,389.80 384.30,398.11 374.70,398.11 369.90,389.80 374.70,381.49 384.30,381.49" fill="#fff" stroke="#b9b9b9" stroke-width="0.8"/><text x="379.50" y="392.60" text-anchor="middle" font-family="Liberation Sans" font-weight="bold" font-size="8" fill="#111">B</text><polygon points="418.80,389.80 414.00,398.11 404.40,398.11 399.60,389.80 404.40,381.49 414.00,381.49" fill="#fff" stroke="#b9b9b9" stroke-width="0.8"/><text x="409.20" y="392.60" text-anchor="middle" font-family="Liberation Sans" font-weight="bold" font-size="8" fill="#111">N</text><polygon points="448.50,389.80 443.70,398.11 434.10,398.11 429.30,389.80 434.10,381.49 443.70,381.49" fill="#fff" stroke="#b9b9b9" stroke-width="0.8"/><text x="438.90" y="392.60" text-anchor="middle" font-family="Liberation Sans" font-weight="bold" font-size="8" fill="#111">M</text><polygon points="478.20,389.80 473.40,398.11 463.80,398.11 459.00,389.80 463.80,381.49 473.40,381.49" fill="#fff" stroke="#b9b9b9" stroke-width="0.8"/><text x="468.60" y="392.60" text-anchor="middle" font-family="Liberation Sans" font-weight="bold" font-size="8" fill="#111">,</text><polygon points="507.90,389.80 503.10,398.11 493.50,398.11 488.70,389.80 493.50,381.49 503.10,381.49" fill="#fff" stroke="#b9b9b9" stroke-width="0.8"/><text x="498.30" y="392.60" text-anchor="middle" font-family="Liberation Sans" font-weight="bold" font-size="8" fill="#111">.</text><polygon points="537.60,389.80 532.80,398.11 523.20,398.11 518.40,389.80 523.20,381.49 532.80,381.49" fill="#fff" stroke="#b9b9b9" stroke-width="0.8"/><text x="528.00" y="392.60" text-anchor="middle" font-family="Liberation Sans" font-weight="bold" font-size="8" fill="#111">-</text><polygon points="270.30,355.00 265.50,363.31 255.90,363.31 251.10,355.00 255.90,346.69 265.50,346.69" fill="#000" stroke="none" stroke-width="0.8"/><text x="260.70" y="357.80" text-anchor="middle" font-family="Liberation Sans" font-weight="bold" font-size="8" fill="#fff">2</text><polygon points="300.00,355.00 295.20,363.31 285.60,363.31 280.80,355.00 285.60,346.69 295.20,346.69" fill="#000" stroke="none" stroke-width="0.8"/><text x="290.40" y="357.80" text-anchor="middle" font-family="Liberation Sans" font-weight="bold" font-size="8" fill="#fff">3</text><polygon points="359.40,355.00 354.60,363.31 345.00,363.31 340.20,355.00 345.00,346.69 354.60,346.69" fill="#000" stroke="none" stroke-width="0.8"/><text x="349.80" y="357.80" text-anchor="middle" font-family="Liberation Sans" font-weight="bold" font-size="8" fill="#fff">5</text><polygon points="389.10,355.00 384.30,363.31 374.70,363.31 369.90,355.00 374.70,346.69 384.30,346.69" fill="#000" stroke="none" stroke-width="0.8"/><text x="379.50" y="357.80" text-anchor="middle" font-family="Liberation Sans" font-weight="bold" font-size="8" fill="#fff">6</text><polygon points="418.80,355.00 414.00,363.31 404.40,363.31 399.60,355.00 404.40,346.69 414.00,346.69" fill="#000" stroke="none" stroke-width="0.8"/><text x="409.20" y="357.80" text-anchor="middle" font-family="Liberation Sans" font-weight="bold" font-size="8" fill="#fff">7</text><polygon points="478.20,355.00 473.40,363.31 463.80,363.31 459.00,355.00 463.80,346.69 473.40,346.69" fill="#000" stroke="none" stroke-width="0.8"/><text x="468.60" y="357.80" text-anchor="middle" font-family="Liberation Sans" font-weight="bold" font-size="8" fill="#fff">9</text><polygon points="507.90,355.00 503.10,363.31 493.50,363.31 488.70,355.00 493.50,346.69 503.10,346.69" fill="#000" stroke="none" stroke-width="0.8"/><text x="498.30" y="357.80" text-anchor="middle" font-family="Liberation Sans" font-weight="bold" font-size="8" fill="#fff">0</text><polygon points="567.30,355.00 562.50,363.31 552.90,363.31 548.10,355.00 552.90,346.69 562.50,346.69" fill="#000" stroke="none" stroke-width="0.8"/><text x="557.70" y="357.80" text-anchor="middle" font-family="Liberation Sans" font-weight="bold" font-size="8" fill="#fff">´</text><polygon points="285.15,381.00 280.35,389.31 270.75,389.31 265.95,381.00 270.75,372.69 280.35,372.69" fill="#000" stroke="none" stroke-width="0.8"/><text x="275.55" y="383.80" text-anchor="middle" font-family="Liberation Sans" font-weight="bold" font-size="8" fill="#fff">S</text><polygon points="314.85,381.00 310.05,389.31 300.45,389.31 295.65,381.00 300.45,372.69 310.05,372.69" fill="#000" stroke="none" stroke-width="0.8"/><text x="305.25" y="383.80" text-anchor="middle" font-family="Liberation Sans" font-weight="bold" font-size="8" fill="#fff">D</text><polygon points="374.25,381.00 369.45,389.31 359.85,389.31 355.05,381.00 359.85,372.69 369.45,372.69" fill="#000" stroke="none" stroke-width="0.8"/><text x="364.65" y="383.80" text-anchor="middle" font-family="Liberation Sans" font-weight="bold" font-size="8" fill="#fff">G</text><polygon points="403.95,381.00 399.15,389.31 389.55,389.31 384.75,381.00 389.55,372.69 399.15,372.69" fill="#000" stroke="none" stroke-width="0.8"/><text x="394.35" y="383.80" text-anchor="middle" font-family="Liberation Sans" font-weight="bold" font-size="8" fill="#fff">H</text><polygon points="433.65,381.00 428.85,389.31 419.25,389.31 414.45,381.00 419.25,372.69 428.85,372.69" fill="#000" stroke="none" stroke-width="0.8"/><text x="424.05" y="383.80" text-anchor="middle" font-family="Liberation Sans" font-weight="bold" font-size="8" fill="#fff">J</text><polygon points="493.05,381.00 488.25,389.31 478.65,389.31 473.85,381.00 478.65,372.69 488.25,372.69" fill="#000" stroke="none" stroke-width="0.8"/><text x="483.45" y="383.80" text-anchor="middle" font-family="Liberation Sans" font-weight="bold" font-size="8" fill="#fff">L</text><polygon points="522.75,381.00 517.95,389.31 508.35,389.31 503.55,381.00 508.35,372.69 517.95,372.69" fill="#000" stroke="none" stroke-width="0.8"/><text x="513.15" y="383.80" text-anchor="middle" font-family="Liberation Sans" font-weight="bold" font-size="8" fill="#fff">æ</text></svg>
<div style="position:absolute;left:610px;top:339px;width:1px;height:65px;background:#a0a0a0"></div>
<div style="position:absolute;left:616px;top:339.5px;width:14px;height:64px;background:#3f4a43;border-radius:1px"></div>
<svg style="position:absolute;left:616px;top:339px" width="14" height="65"><g fill="#8fbf9c"><rect x="1" y="2.0" width="2.5" height="1"/><rect x="1" y="6.2" width="2.5" height="1"/><rect x="1" y="10.4" width="2.5" height="1"/><rect x="1" y="14.6" width="2.5" height="1"/><rect x="1" y="18.8" width="2.5" height="1"/><rect x="1" y="23.0" width="2.5" height="1"/><rect x="1" y="27.2" width="2.5" height="1"/><rect x="1" y="31.4" width="2.5" height="1"/><rect x="1" y="35.6" width="2.5" height="1"/><rect x="1" y="39.8" width="2.5" height="1"/><rect x="1" y="44.0" width="2.5" height="1"/><rect x="1" y="48.2" width="2.5" height="1"/><rect x="1" y="52.4" width="2.5" height="1"/><rect x="1" y="56.6" width="2.5" height="1"/><rect x="1" y="60.8" width="2.5" height="1"/></g><text transform="translate(11.3 62) rotate(-90)" font-family="Liberation Sans" font-size="7.8" fill="#9ccaa6">01 - Arp - Stac..</text></svg>
<div style="position:absolute;left:633px;top:339.5px;width:61px;height:64px;background:#3c4541;border-radius:2px"></div>
<div style="position:absolute;left:635.0px;top:341.2px;width:13.5px;height:13.5px;border-radius:2px;box-sizing:border-box;background:#7fae8b;border:1px solid #96c2a2;"></div>
<div class="t" style="left:635.0px;top:343.2px;font-size:8px;color:#f4faf6;font-weight:normal;text-align:center;width:13.5px;-webkit-text-stroke-width:0.1px;">01</div>
<div style="position:absolute;left:650.8px;top:341.2px;width:13.5px;height:13.5px;border-radius:2px;box-sizing:border-box;background:#5a6e60;border:1px solid #7c9683;"></div>
<div class="t" style="left:650.8px;top:343.2px;font-size:8px;color:#e8efe9;font-weight:normal;text-align:center;width:13.5px;-webkit-text-stroke-width:0.1px;">02</div>
<div style="position:absolute;left:666.6px;top:341.2px;width:13.5px;height:13.5px;border-radius:2px;box-sizing:border-box;background:#5a6e60;border:1px solid #7c9683;"></div>
<div class="t" style="left:666.6px;top:343.2px;font-size:8px;color:#e8efe9;font-weight:normal;text-align:center;width:13.5px;-webkit-text-stroke-width:0.1px;">03</div>
<div style="position:absolute;left:635.0px;top:356.9px;width:13.5px;height:13.5px;border-radius:2px;box-sizing:border-box;background:#5a6e60;border:1px solid #7c9683;"></div>
<div class="t" style="left:635.0px;top:358.9px;font-size:8px;color:#e8efe9;font-weight:normal;text-align:center;width:13.5px;-webkit-text-stroke-width:0.1px;">04</div>
<div style="position:absolute;left:650.8px;top:356.9px;width:13.5px;height:13.5px;border-radius:2px;box-sizing:border-box;background:#5a6e60;border:1px solid #7c9683;"></div>
<div class="t" style="left:650.8px;top:358.9px;font-size:8px;color:#e8efe9;font-weight:normal;text-align:center;width:13.5px;-webkit-text-stroke-width:0.1px;">05</div>
<div style="position:absolute;left:666.6px;top:356.9px;width:13.5px;height:13.5px;border-radius:2px;box-sizing:border-box;background:#5a6e60;border:1px solid #7c9683;"></div>
<div class="t" style="left:666.6px;top:358.9px;font-size:8px;color:#e8efe9;font-weight:normal;text-align:center;width:13.5px;-webkit-text-stroke-width:0.1px;">06</div>
<div style="position:absolute;left:635.0px;top:372.6px;width:13.5px;height:13.5px;border-radius:2px;box-sizing:border-box;background:#434c48;border:1px solid #4c5551;"></div>
<div style="position:absolute;left:650.8px;top:372.6px;width:13.5px;height:13.5px;border-radius:2px;box-sizing:border-box;background:#434c48;border:1px solid #4c5551;"></div>
<div style="position:absolute;left:666.6px;top:372.6px;width:13.5px;height:13.5px;border-radius:2px;box-sizing:border-box;background:#434c48;border:1px solid #4c5551;"></div>
<div style="position:absolute;left:635.0px;top:388.3px;width:13.5px;height:13.5px;border-radius:2px;box-sizing:border-box;background:#434c48;border:1px solid #4c5551;"></div>
<div style="position:absolute;left:650.8px;top:388.3px;width:13.5px;height:13.5px;border-radius:2px;box-sizing:border-box;background:#434c48;border:1px solid #4c5551;"></div>
<div style="position:absolute;left:666.6px;top:388.3px;width:13.5px;height:13.5px;border-radius:2px;box-sizing:border-box;background:#434c48;border:1px solid #4c5551;"></div>
<div class="b" style="left:682.5px;top:341.5px;width:10px;height:10px;line-height:10px;font-size:7.8px;color:#222;font-weight:normal;"></div>
<div class="b" style="left:682.5px;top:353.5px;width:10px;height:10px;line-height:10px;font-size:7.8px;color:#222;font-weight:normal;"></div>
<div style="left:685px;top:346px;width:5px;height:1px;background:#666"></div><div style="left:685px;top:358px;width:5px;height:1px;background:#222"></div><div style="left:687px;top:356px;width:1px;height:5px;background:#222"></div>
<div style="position:absolute;left:683px;top:366px;width:9.5px;height:36px;background:#9ea6a2;border-radius:1px"></div>
<div class="t" style="left:699.5px;top:339.3px;font-size:7.8px;color:#666;font-weight:normal;text-align:left;">Phrases</div>
<div class="b" style="left:699.5px;top:350px;width:13px;height:13px;line-height:13px;font-size:7.8px;color:#222;font-weight:normal;"></div>
<div class="b" style="left:712.5px;top:350px;width:13px;height:13px;line-height:13px;font-size:7.8px;color:#222;font-weight:normal;"></div>
<svg style="position:absolute;left:699.5px;top:350px" width="27" height="13"><path d="M4 2.8 L9.5 6.5 L4 10.2Z" fill="#111"/><rect x="16.5" y="3.8" width="6" height="5.5" fill="#111"/></svg>
<div class="b" style="left:730px;top:350px;width:13.5px;height:13px;line-height:13px;font-size:7.8px;color:#222;font-weight:normal;"></div>
<svg style="position:absolute;left:731px;top:351px" width="12" height="11"><path d="M3 5 A3 3 0 0 1 8.5 3.5 M9 6 A3 3 0 0 1 3.5 7.5" stroke="#111" stroke-width="1.3" fill="none"/><path d="M7 1.5 L10 3.5 L7.5 5.5Z M5 9.5 L2 7.5 L4.5 5.5Z" fill="#111"/></svg>
<div class="b" style="left:699.5px;top:367px;width:44px;height:11.5px;line-height:11.5px;font-size:7.8px;color:#222;font-weight:normal;">Off</div>
<div class="b act" style="left:699.5px;top:378.5px;width:44px;height:12.5px;line-height:12.5px;font-size:7.8px;color:#f8e6e0;font-weight:normal;">Program</div>
<div class="b" style="left:699.5px;top:391px;width:44px;height:12.5px;line-height:12.5px;font-size:7.8px;color:#222;font-weight:normal;">Keymap</div>
<svg style="position:absolute;left:756px;top:413px" width="14" height="14"><path d="M14 6 L6 14 M14 9 L9 14 M14 12 L12 14" stroke="#8a8a8a" stroke-width="0.8"/></svg></body></html>
